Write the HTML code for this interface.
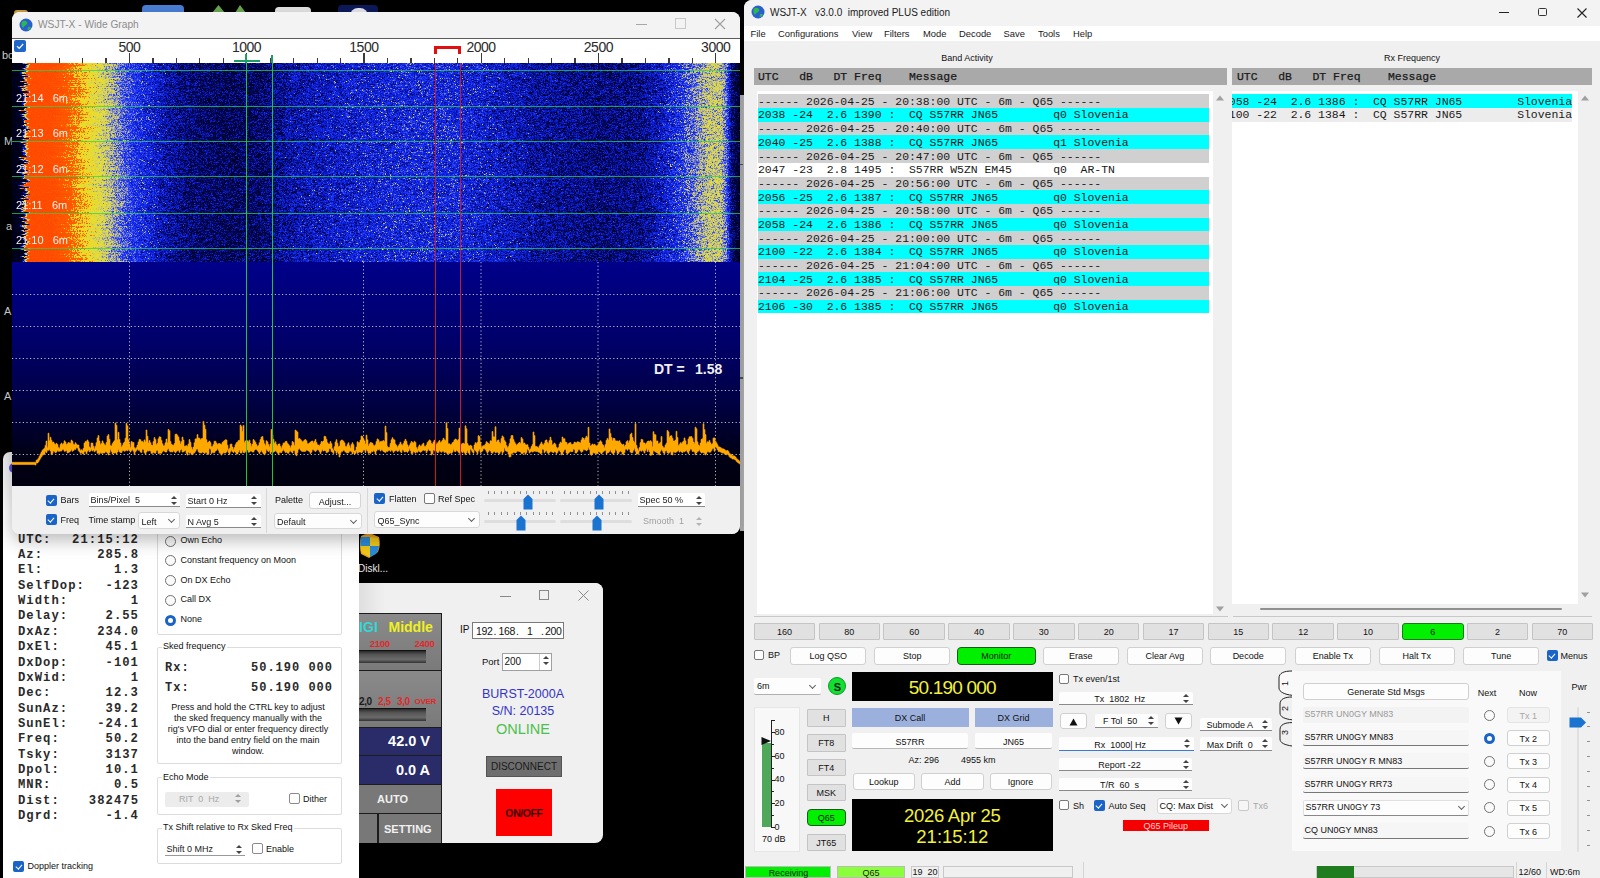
<!DOCTYPE html>
<html><head><meta charset="utf-8">
<style>
*{box-sizing:border-box}
html,body{margin:0;padding:0}
body{width:1600px;height:878px;background:#000;position:relative;overflow:hidden;font-family:"Liberation Sans",sans-serif;font-size:11px;color:#000}
.a{position:absolute}
.mono{font-family:"Liberation Mono",monospace}
.win{position:absolute;background:#f0f0f0}
.t{position:absolute;white-space:pre;line-height:1}
.ui{font-size:9px;color:#111}
.cb{position:absolute;width:11px;height:11px;background:#1a64c8;border-radius:2px}
.cb:after{content:"";position:absolute;left:3.6px;top:2px;width:2.6px;height:5px;border:solid #fff;border-width:0 1.1px 1.1px 0;transform:rotate(42deg)}
.cbu{position:absolute;width:11px;height:11px;background:#fdfdfd;border:1px solid #777;border-radius:2px}
.spin{position:absolute;background:#fff;border-bottom:1px solid #8a8a8a;border-radius:2px 2px 0 0}
.spin span{position:absolute;top:3.3px;font-size:9px;line-height:1;white-space:pre;color:#1a1a1a}
.spin i{position:absolute;right:3px;top:2px;width:7px;height:10px;background:linear-gradient(#555,#555) no-repeat}
.spin i{background:none}
.spin i:before{content:"";position:absolute;left:0.5px;top:0.5px;border:3px solid transparent;border-bottom:3.2px solid #444;border-top:0}
.spin i:after{content:"";position:absolute;left:0.5px;top:6.5px;border:3px solid transparent;border-top:3.2px solid #444;border-bottom:0}
.btn{position:absolute;background:#fdfdfd;border:1px solid #d4d4d4;border-radius:3px;font-size:9px;line-height:1;text-align:center;padding-top:4.5px;color:#1a1a1a;white-space:pre}
.combo{position:absolute;background:#fdfdfd;border:1px solid #d8d8d8;border-radius:3px}
.combo span{position:absolute;left:2.5px;top:4.5px;font-size:9px;line-height:1;white-space:pre;color:#1a1a1a}
.combo b{position:absolute;right:5px;top:4px;width:5px;height:5px;border:solid #606060;border-width:0 1px 1px 0;transform:rotate(45deg)}
.am{font-family:"Liberation Mono",monospace;font-weight:bold;font-size:12.2px;letter-spacing:1.05px;color:#2a2a2a}
.am2{font-family:"Liberation Mono",monospace;font-weight:bold;font-size:12px;letter-spacing:1px;color:#2a2a2a}
.spinarr{position:absolute;width:7px;height:10px}
.spinarr:before{content:"";position:absolute;left:0;top:0;border:3px solid transparent;border-bottom:3.2px solid #444;border-top:0}
.spinarr:after{content:"";position:absolute;left:0;top:6px;border:3px solid transparent;border-top:3.2px solid #444;border-bottom:0}
.lm{font-family:"Liberation Mono",monospace;font-size:11.45px;color:#1a1a1a}
.lm2{font-family:"Liberation Mono",monospace;font-size:11.45px;color:#1a1a1a;-webkit-text-stroke:0.25px #1a1a1a}
</style></head>
<body>
<!-- desktop bits -->
<div class="a" style="left:14px;top:10px;width:14px;height:6px;background:#c9a040;border-radius:3px 3px 0 0"></div>
<div class="a" style="left:142px;top:4.5px;width:42px;height:10px;background:#4a80d8;border-radius:4px 4px 0 0"></div>
<svg class="a" style="left:210px;top:4px" width="40" height="10"><path d="M2 9L8.5 1L15 9Z M25 9L30 1L36 9Z" fill="#6aa84f"/></svg>
<div class="a" style="left:275px;top:7px;width:36px;height:8px;background:#e6e6e6;border-radius:4px 4px 0 0"></div>
<div class="a" style="left:338px;top:4.5px;width:40px;height:10px;background:#0c1a5c;border-radius:4px 4px 0 0"></div>
<div class="a" style="left:350px;top:8px;width:18px;height:8px;background:#e8e8f0;border-radius:9px 9px 0 0"></div>
<div class="t" style="left:2px;top:50px;font-size:11px;color:#d8d8d8">bc</div>
<div class="t" style="left:4px;top:136px;font-size:11px;color:#d8d8d8">M</div>
<div class="t" style="left:6px;top:221px;font-size:11px;color:#d8d8d8">a</div>
<div class="t" style="left:4px;top:306px;font-size:11px;color:#d8d8d8">A</div>
<div class="t" style="left:4px;top:391px;font-size:11px;color:#d8d8d8">A</div>
<svg class="a" style="left:358px;top:533px" width="24" height="26" viewBox="0 0 24 26"><path d="M3 3 Q8 0 14 1 L21 4 Q23 12 20 19 L11 25 L3 21 Q1 12 3 3Z" fill="#e8a020"/><path d="M3 4 L12 4 L12 13 L2.5 13 Q2 8 3 4Z" fill="#2a8ad8"/><path d="M12 13 L21 13 Q20 19 18 21 L12 24Z" fill="#2a8ad8"/><path d="M12 4 L20 5 Q21.5 9 21 13 L12 13Z" fill="#f0c818"/><path d="M2.5 13 L12 13 L12 24 L4 20 Q2.5 17 2.5 13Z" fill="#f0c818"/></svg>
<div class="t" style="left:358px;top:564px;font-size:10px;color:#e8e8e8">Diskl...</div>
<!-- gray strip -->
<div class="a" style="left:740px;top:94.6px;width:4px;height:436px;background:#b4b4b4"></div>
<div class="a" style="left:740px;top:163.5px;width:3px;height:1.5px;background:#555"></div>
<div class="a" style="left:740px;top:377px;width:3px;height:1.5px;background:#555"></div>
<!-- POWER SUPPLY WINDOW -->
<div id="ps" class="a" style="left:355px;top:583px;width:248px;height:260px;border-radius:0 8px 8px 0;background:#f0f0f0;overflow:hidden">
<div class="a" style="left:0;top:0;width:248px;height:30px;background:linear-gradient(90deg,#dcdcdc,#f0f0f0 30px)"></div>
<div class="a" style="left:145px;top:12.5px;width:11px;height:1px;background:#888"></div>
<div class="a" style="left:184px;top:7px;width:10px;height:10px;border:1px solid #888"></div>
<svg class="a" style="left:223px;top:7px" width="11" height="11"><path d="M0.5 0.5L10.5 10.5M10.5 0.5L0.5 10.5" stroke="#888" stroke-width="1"/></svg>
<div class="a" style="left:0;top:29.5px;width:87px;height:231px;background:#1c1c1c"></div>
<div class="a" style="left:0;top:30.5px;width:86px;height:56px;background:linear-gradient(#8a8a8a,#7a7a7a)"></div>
<div class="t" style="left:-6px;top:37px;font-size:14px;font-weight:bold;color:#30d8d8">DIGI</div><div class="t" style="left:33.5px;top:37px;font-size:14px;font-weight:bold;color:#f0f020">Middle</div>
<div class="t" style="left:14.8px;top:56px;font-size:9.5px;font-weight:bold;color:#e02828;letter-spacing:-0.3px">2100</div><div class="t" style="left:59.5px;top:56px;font-size:9.5px;font-weight:bold;color:#e02828;letter-spacing:-0.3px">2400</div>
<div class="a" style="left:0;top:67px;width:71px;height:13px;background:linear-gradient(#2a2a2a,#555 30%,#6a6a6a 70%,#333);border-top:1px solid #111"></div>
<div class="a" style="left:0;top:87.5px;width:86px;height:56px;background:linear-gradient(#8a8a8a,#7a7a7a)"></div>
<div class="t" style="left:4px;top:113.5px;font-size:10px;font-weight:bold;color:#1a1a1a;letter-spacing:-0.4px">2,0</div><div class="t" style="left:23px;top:113.5px;font-size:10px;font-weight:bold;color:#e02828;letter-spacing:-0.4px">2,5</div><div class="t" style="left:42px;top:113.5px;font-size:10px;font-weight:bold;color:#e02828;letter-spacing:-0.4px">3,0</div><div class="t" style="left:59.5px;top:115px;font-size:8px;font-weight:bold;color:#e02828;letter-spacing:-0.3px">OVER</div>
<div class="a" style="left:0;top:124.5px;width:71px;height:13px;background:linear-gradient(#2a2a2a,#555 30%,#6a6a6a 70%,#333);border-top:1px solid #111"></div>
<div class="a" style="left:0;top:145px;width:86px;height:27px;background:#2a2c6a"></div><div class="t" style="left:0;top:151px;width:75px;text-align:right;font-size:14.5px;font-weight:bold;color:#fff">42.0 V</div>
<div class="a" style="left:0;top:173px;width:86px;height:27.5px;background:#2a2c6a"></div><div class="t" style="left:0;top:180px;width:75px;text-align:right;font-size:14.5px;font-weight:bold;color:#fff">0.0 A</div>
<div class="a" style="left:0;top:201.5px;width:86px;height:28px;background:#787878"></div><div class="t" style="left:22px;top:211px;font-size:11px;font-weight:bold;color:#f0f0f0">AUTO</div>
<div class="a" style="left:0;top:231px;width:22px;height:29px;background:#787878"></div>
<div class="a" style="left:24px;top:231px;width:62px;height:29px;background:#787878"></div><div class="t" style="left:29px;top:241px;font-size:11px;font-weight:bold;color:#f0f0f0">SETTING</div>
<div class="t ui" style="left:105px;top:42px;font-size:10px">IP</div>
<div class="a" style="left:117px;top:39px;width:92px;height:17px;background:#fff;border:1px solid #7a7a7a"></div>
<div class="t" style="left:121px;top:42.5px;font-size:10.5px;color:#111;letter-spacing:-0.3px">192</div><div class="t" style="left:138.5px;top:42.5px;font-size:10.5px;color:#111">.</div><div class="t" style="left:143.5px;top:42.5px;font-size:10.5px;color:#111;letter-spacing:-0.3px">168</div><div class="t" style="left:161px;top:42.5px;font-size:10.5px;color:#111">.</div><div class="t" style="left:172px;top:42.5px;font-size:10.5px;color:#111">1</div><div class="t" style="left:186px;top:42.5px;font-size:10.5px;color:#111">.</div><div class="t" style="left:190px;top:42.5px;font-size:10.5px;color:#111;letter-spacing:-0.3px">200</div>
<div class="t ui" style="left:127px;top:74px;font-size:9.5px">Port</div>
<div class="a" style="left:147px;top:70px;width:50px;height:18px;background:#fff;border:1px solid #a0a0a0"></div><div class="t" style="left:149.5px;top:73.5px;font-size:10px;color:#111">200</div>
<div class="a" style="left:184px;top:71px;width:12px;height:16px;border-left:1px solid #ccc"><div class="spinarr" style="left:3px;top:2px"></div></div>
<div class="t" style="left:118px;top:105px;width:100px;text-align:center;font-size:12.5px;color:#3434c4">BURST-2000A</div>
<div class="t" style="left:118px;top:121.5px;width:100px;text-align:center;font-size:12.5px;color:#3434c4">S/N: 20135</div>
<div class="t" style="left:118px;top:138.5px;width:100px;text-align:center;font-size:14.5px;color:#4cc04c">ONLINE</div>
<div class="a" style="left:131px;top:173px;width:76px;height:21px;background:#6e6e6e;border:1px solid #555"></div><div class="t" style="left:131px;top:179px;width:76px;text-align:center;font-size:10px;color:#1a1a1a">DISCONNECT</div>
<div class="a" style="left:141px;top:206px;width:56px;height:47px;background:#ff0000"></div><div class="t" style="left:141px;top:225px;width:56px;text-align:center;font-size:10.5px;font-weight:bold;color:#3a0000;letter-spacing:-0.4px">ON/OFF</div>
</div>

<!-- ASTRO WINDOW -->
<div id="astro" class="a" style="left:3px;top:452px;width:356px;height:426px;background:linear-gradient(#ececec,#f4f4f4 30px,#fff 60px);border-radius:7px 0 0 0">
<div class="a" style="left:6px;top:11px;width:10px;height:10px;border-radius:50%;background:#5b4fd0"></div>
<div class="t am" style="left:15px;top:81.5px">UTC:</div><div class="t am" style="left:34.5px;top:81.5px;width:101.5px;text-align:right">21:15:12</div>
<div class="t am" style="left:15px;top:96.9px">Az:</div><div class="t am" style="left:34.5px;top:96.9px;width:101.5px;text-align:right">285.8</div>
<div class="t am" style="left:15px;top:112.2px">El:</div><div class="t am" style="left:34.5px;top:112.2px;width:101.5px;text-align:right">1.3</div>
<div class="t am" style="left:15px;top:127.6px">SelfDop:</div><div class="t am" style="left:34.5px;top:127.6px;width:101.5px;text-align:right">-123</div>
<div class="t am" style="left:15px;top:143.0px">Width:</div><div class="t am" style="left:34.5px;top:143.0px;width:101.5px;text-align:right">1</div>
<div class="t am" style="left:15px;top:158.3px">Delay:</div><div class="t am" style="left:34.5px;top:158.3px;width:101.5px;text-align:right">2.55</div>
<div class="t am" style="left:15px;top:173.7px">DxAz:</div><div class="t am" style="left:34.5px;top:173.7px;width:101.5px;text-align:right">234.0</div>
<div class="t am" style="left:15px;top:189.1px">DxEl:</div><div class="t am" style="left:34.5px;top:189.1px;width:101.5px;text-align:right">45.1</div>
<div class="t am" style="left:15px;top:204.5px">DxDop:</div><div class="t am" style="left:34.5px;top:204.5px;width:101.5px;text-align:right">-101</div>
<div class="t am" style="left:15px;top:219.8px">DxWid:</div><div class="t am" style="left:34.5px;top:219.8px;width:101.5px;text-align:right">1</div>
<div class="t am" style="left:15px;top:235.2px">Dec:</div><div class="t am" style="left:34.5px;top:235.2px;width:101.5px;text-align:right">12.3</div>
<div class="t am" style="left:15px;top:250.6px">SunAz:</div><div class="t am" style="left:34.5px;top:250.6px;width:101.5px;text-align:right">39.2</div>
<div class="t am" style="left:15px;top:265.9px">SunEl:</div><div class="t am" style="left:34.5px;top:265.9px;width:101.5px;text-align:right">-24.1</div>
<div class="t am" style="left:15px;top:281.3px">Freq:</div><div class="t am" style="left:34.5px;top:281.3px;width:101.5px;text-align:right">50.2</div>
<div class="t am" style="left:15px;top:296.7px">Tsky:</div><div class="t am" style="left:34.5px;top:296.7px;width:101.5px;text-align:right">3137</div>
<div class="t am" style="left:15px;top:312.0px">Dpol:</div><div class="t am" style="left:34.5px;top:312.0px;width:101.5px;text-align:right">10.1</div>
<div class="t am" style="left:15px;top:327.4px">MNR:</div><div class="t am" style="left:34.5px;top:327.4px;width:101.5px;text-align:right">0.5</div>
<div class="t am" style="left:15px;top:342.8px">Dist:</div><div class="t am" style="left:34.5px;top:342.8px;width:101.5px;text-align:right">382475</div>
<div class="t am" style="left:15px;top:358.2px">Dgrd:</div><div class="t am" style="left:34.5px;top:358.2px;width:101.5px;text-align:right">-1.4</div>
<div class="a" style="left:154px;top:68px;width:184.5px;height:114.5px;border:1px solid #dcdcdc;border-radius:2px"></div>
<div class="a" style="left:162px;top:83.7px;width:11px;height:11px;border-radius:50%;background:#fafafa;border:1px solid #707070"></div>
<div class="t ui" style="left:177.5px;top:84.2px">Own Echo</div>
<div class="a" style="left:162px;top:103.4px;width:11px;height:11px;border-radius:50%;background:#fafafa;border:1px solid #707070"></div>
<div class="t ui" style="left:177.5px;top:103.9px">Constant frequency on Moon</div>
<div class="a" style="left:162px;top:123.1px;width:11px;height:11px;border-radius:50%;background:#fafafa;border:1px solid #707070"></div>
<div class="t ui" style="left:177.5px;top:123.6px">On DX Echo</div>
<div class="a" style="left:162px;top:142.8px;width:11px;height:11px;border-radius:50%;background:#fafafa;border:1px solid #707070"></div>
<div class="t ui" style="left:177.5px;top:143.3px">Call DX</div>
<div class="a" style="left:162px;top:162.5px;width:11px;height:11px;border-radius:50%;background:#fff;border:3px solid #1a64c8"></div>
<div class="t ui" style="left:177.5px;top:163.0px">None</div>
<div class="a" style="left:154px;top:194.5px;width:184.5px;height:117.5px;border:1px solid #dcdcdc;border-radius:2px"></div><div class="t ui" style="left:159px;top:190.0px;background:#fff;padding:0 1px">Sked frequency</div>
<div class="t am2" style="left:162px;top:209.5px">Rx:</div><div class="t am2" style="left:197px;top:209.5px;width:133px;text-align:right">50.190 000</div>
<div class="t am2" style="left:162px;top:230.1px">Tx:</div><div class="t am2" style="left:197px;top:230.1px;width:133px;text-align:right">50.190 000</div>
<div class="t ui" style="left:145px;top:250.6px;width:200px;text-align:center">Press and hold the CTRL key to adjust</div>
<div class="t ui" style="left:145px;top:261.7px;width:200px;text-align:center">the sked frequency manually with the</div>
<div class="t ui" style="left:145px;top:272.8px;width:200px;text-align:center">rig's VFO dial or enter frequency directly</div>
<div class="t ui" style="left:145px;top:283.9px;width:200px;text-align:center">into the band entry field on the main</div>
<div class="t ui" style="left:145px;top:295.0px;width:200px;text-align:center">window.</div>
<div class="a" style="left:154px;top:325px;width:184.5px;height:38px;border:1px solid #dcdcdc;border-radius:2px"></div><div class="t ui" style="left:159px;top:320.5px;background:#fff;padding:0 1px">Echo Mode</div>
<div class="a" style="left:162px;top:340px;width:84px;height:15px;background:#ececec;border-radius:2px"></div><div class="t ui" style="left:176px;top:343px;color:#a8a8a8">RIT  0  Hz</div>
<div class="a" style="left:232px;top:342px;width:8px;height:10px;opacity:0.45" ><div class="spinarr"></div></div>
<div class="cbu" style="left:286px;top:341px;border-color:#8a8a8a"></div><div class="t ui" style="left:300px;top:342.5px">Dither</div>
<div class="a" style="left:154px;top:375.5px;width:184.5px;height:36.0px;border:1px solid #dcdcdc;border-radius:2px"></div><div class="t ui" style="left:159px;top:371.0px;background:#fff;padding:0 1px">Tx Shift relative to Rx Sked Freq</div>
<div class="spin" style="left:162px;top:390px;width:80px;height:14px;border-bottom-color:#999"><span style="left:1.5px">Shift 0 MHz</span><i></i></div>
<div class="cbu" style="left:249px;top:391px;border-color:#8a8a8a"></div><div class="t ui" style="left:263px;top:392.5px">Enable</div>
<div class="cb" style="left:10px;top:408.5px"></div><div class="t ui" style="left:24.5px;top:410px">Doppler tracking</div>
</div>

<!-- WIDE GRAPH -->
<div id="wgsh" class="a" style="left:12px;top:12px;width:728px;height:522px;border-radius:8px;box-shadow:0 6px 18px rgba(0,0,0,0.28)"></div>
<div id="wg" class="win" style="left:12px;top:12px;width:728px;height:522px;border-radius:8px 8px 8px 8px;overflow:hidden;background:#f0f0f0">
  <div class="a" style="left:0;top:0;width:728px;height:26px;background:#f3f3f3"></div>
  <svg class="a" style="left:7px;top:6px" width="14" height="14" viewBox="0 0 14 14"><circle cx="7" cy="7" r="6.5" fill="#2a5fd0"/><path d="M3 3.5 Q6 2 8 4 Q9 6 7 7 Q5 8 4 10 Q2 8 2.5 5Z M9 9 Q11 8 12 10 Q10 12.5 8.5 12Z" fill="#2cb84a"/></svg>
  <div class="t" style="left:26px;top:7.5px;font-size:10.2px;color:#8c8c8c">WSJT-X - Wide Graph</div>
  <div class="a" style="left:624px;top:12px;width:11px;height:1px;background:#a8a8a8"></div>
  <div class="a" style="left:663px;top:6px;width:11px;height:11px;border:1px solid #c8c8c8"></div>
  <svg class="a" style="left:702px;top:6px" width="12" height="12"><path d="M1 1L11 11M11 1L1 11" stroke="#a0a0a0" stroke-width="1.1"/></svg>
  <div class="a" style="left:0;top:26px;width:728px;height:25px;background:#fff"></div><div id="tbline" class="a" style="left:0;top:25.5px;width:728px;height:1px;background:#5a5a5a"></div>
  <div class="a" style="left:2px;top:28px;width:12px;height:12px;background:#1e66c8;border-radius:2px"></div>
  <svg class="a" style="left:2px;top:28px" width="12" height="12"><path d="M3 6.2L5.2 8.4L9.2 4" stroke="#fff" stroke-width="1.2" fill="none"/></svg>
<div class="a" style="left:23.1px;top:46px;width:1.3px;height:5px;background:#3a3a3a"></div>
<div class="a" style="left:46.5px;top:46px;width:1.3px;height:5px;background:#3a3a3a"></div>
<div class="a" style="left:70.0px;top:46px;width:1.3px;height:5px;background:#3a3a3a"></div>
<div class="a" style="left:93.4px;top:46px;width:1.3px;height:5px;background:#3a3a3a"></div>
<div class="a" style="left:116.9px;top:41px;width:1.3px;height:10px;background:#3a3a3a"></div>
<div class="a" style="left:140.3px;top:46px;width:1.3px;height:5px;background:#3a3a3a"></div>
<div class="a" style="left:163.8px;top:46px;width:1.3px;height:5px;background:#3a3a3a"></div>
<div class="a" style="left:187.2px;top:46px;width:1.3px;height:5px;background:#3a3a3a"></div>
<div class="a" style="left:210.7px;top:46px;width:1.3px;height:5px;background:#3a3a3a"></div>
<div class="a" style="left:234.1px;top:41px;width:1.3px;height:10px;background:#3a3a3a"></div>
<div class="a" style="left:257.6px;top:46px;width:1.3px;height:5px;background:#3a3a3a"></div>
<div class="a" style="left:281.0px;top:46px;width:1.3px;height:5px;background:#3a3a3a"></div>
<div class="a" style="left:304.5px;top:46px;width:1.3px;height:5px;background:#3a3a3a"></div>
<div class="a" style="left:327.9px;top:46px;width:1.3px;height:5px;background:#3a3a3a"></div>
<div class="a" style="left:351.4px;top:41px;width:1.3px;height:10px;background:#3a3a3a"></div>
<div class="a" style="left:374.8px;top:46px;width:1.3px;height:5px;background:#3a3a3a"></div>
<div class="a" style="left:398.3px;top:46px;width:1.3px;height:5px;background:#3a3a3a"></div>
<div class="a" style="left:421.7px;top:46px;width:1.3px;height:5px;background:#3a3a3a"></div>
<div class="a" style="left:445.2px;top:46px;width:1.3px;height:5px;background:#3a3a3a"></div>
<div class="a" style="left:468.6px;top:41px;width:1.3px;height:10px;background:#3a3a3a"></div>
<div class="a" style="left:492.1px;top:46px;width:1.3px;height:5px;background:#3a3a3a"></div>
<div class="a" style="left:515.5px;top:46px;width:1.3px;height:5px;background:#3a3a3a"></div>
<div class="a" style="left:539.0px;top:46px;width:1.3px;height:5px;background:#3a3a3a"></div>
<div class="a" style="left:562.4px;top:46px;width:1.3px;height:5px;background:#3a3a3a"></div>
<div class="a" style="left:585.9px;top:41px;width:1.3px;height:10px;background:#3a3a3a"></div>
<div class="a" style="left:609.4px;top:46px;width:1.3px;height:5px;background:#3a3a3a"></div>
<div class="a" style="left:632.8px;top:46px;width:1.3px;height:5px;background:#3a3a3a"></div>
<div class="a" style="left:656.3px;top:46px;width:1.3px;height:5px;background:#3a3a3a"></div>
<div class="a" style="left:679.7px;top:46px;width:1.3px;height:5px;background:#3a3a3a"></div>
<div class="a" style="left:703.2px;top:41px;width:1.3px;height:10px;background:#3a3a3a"></div>
<div class="t" style="left:77.4px;top:27.8px;width:80px;text-align:center;font-size:14px;letter-spacing:-0.5px;color:#2a2a2a">500</div>
<div class="t" style="left:194.6px;top:27.8px;width:80px;text-align:center;font-size:14px;letter-spacing:-0.5px;color:#2a2a2a">1000</div>
<div class="t" style="left:311.9px;top:27.8px;width:80px;text-align:center;font-size:14px;letter-spacing:-0.5px;color:#2a2a2a">1500</div>
<div class="t" style="left:429.1px;top:27.8px;width:80px;text-align:center;font-size:14px;letter-spacing:-0.5px;color:#2a2a2a">2000</div>
<div class="t" style="left:546.4px;top:27.8px;width:80px;text-align:center;font-size:14px;letter-spacing:-0.5px;color:#2a2a2a">2500</div>
<div class="t" style="left:663.7px;top:27.8px;width:80px;text-align:center;font-size:14px;letter-spacing:-0.5px;color:#2a2a2a">3000</div>
  <!-- scale markers -->
  <div class="a" style="left:221.5px;top:47.5px;width:26.5px;height:2.5px;background:#1e9e60"></div>
  <div class="a" style="left:233px;top:42px;width:2px;height:9px;background:#1e9e60"></div>
  <div class="a" style="left:259px;top:43px;width:2px;height:8px;background:#1e9e60"></div>
  <div class="a" style="left:422px;top:34px;width:27px;height:3px;background:#e01010"></div>
  <div class="a" style="left:422px;top:34px;width:3px;height:8px;background:#e01010"></div>
  <div class="a" style="left:446px;top:34px;width:3px;height:8px;background:#e01010"></div>
  <!-- waterfall -->
  <div id="wfbg" class="a" style="left:0;top:51px;width:728px;height:199px;background:linear-gradient(90deg,rgb(0,0,25) 0px,rgb(0,0,27) 3px,rgb(2,3,37) 6px,rgb(28,26,66) 9px,rgb(109,77,80) 12px,rgb(205,99,43) 15px,rgb(249,82,7) 18px,rgb(254,75,0) 21px,rgb(255,75,0) 24px,rgb(255,75,0) 27px,rgb(255,75,0) 30px,rgb(255,76,0) 37px,rgb(254,79,0) 44px,rgb(254,90,1) 51px,rgb(252,112,5) 58px,rgb(246,151,17) 65px,rgb(239,188,31) 72px,rgb(229,210,50) 79px,rgb(217,210,73) 86px,rgb(192,192,110) 93px,rgb(157,162,151) 100px,rgb(117,128,189) 107px,rgb(72,89,218) 114px,rgb(44,64,227) 121px,rgb(35,54,219) 128px,rgb(27,45,210) 135px,rgb(20,36,194) 142px,rgb(12,27,175) 149px,rgb(8,21,156) 156px,rgb(6,18,145) 163px,rgb(5,15,131) 170px,rgb(4,13,119) 177px,rgb(3,12,115) 184px,rgb(3,11,108) 191px,rgb(3,10,105) 198px,rgb(2,9,99) 205px,rgb(2,9,96) 212px,rgb(2,9,95) 219px,rgb(2,9,97) 226px,rgb(2,10,102) 233px,rgb(2,10,103) 240px,rgb(3,10,105) 247px,rgb(3,12,115) 254px,rgb(5,15,132) 261px,rgb(6,18,144) 268px,rgb(8,21,157) 275px,rgb(10,24,164) 282px,rgb(11,26,171) 289px,rgb(12,27,173) 296px,rgb(14,30,181) 303px,rgb(14,29,181) 310px,rgb(17,33,189) 317px,rgb(17,33,188) 324px,rgb(19,36,195) 331px,rgb(23,40,198) 338px,rgb(23,40,198) 345px,rgb(24,41,202) 352px,rgb(24,42,204) 359px,rgb(26,43,202) 366px,rgb(29,47,205) 373px,rgb(29,47,205) 380px,rgb(29,47,209) 387px,rgb(30,49,209) 394px,rgb(30,48,211) 401px,rgb(34,52,208) 408px,rgb(31,50,210) 415px,rgb(29,47,207) 422px,rgb(31,48,207) 429px,rgb(31,49,210) 436px,rgb(30,48,207) 443px,rgb(27,45,203) 450px,rgb(24,42,204) 457px,rgb(23,40,200) 464px,rgb(21,38,196) 471px,rgb(20,36,191) 478px,rgb(18,34,188) 485px,rgb(14,30,182) 492px,rgb(13,28,176) 499px,rgb(12,26,173) 506px,rgb(10,23,165) 513px,rgb(8,21,155) 520px,rgb(7,20,152) 527px,rgb(7,19,147) 534px,rgb(7,19,147) 541px,rgb(6,17,141) 548px,rgb(6,17,139) 555px,rgb(5,16,135) 562px,rgb(5,16,134) 569px,rgb(4,15,127) 576px,rgb(4,14,124) 583px,rgb(4,14,123) 590px,rgb(4,14,122) 597px,rgb(4,14,126) 604px,rgb(4,15,128) 611px,rgb(5,15,129) 618px,rgb(5,15,132) 625px,rgb(6,18,145) 632px,rgb(9,23,160) 639px,rgb(14,28,175) 646px,rgb(20,37,194) 653px,rgb(30,48,207) 660px,rgb(43,62,216) 667px,rgb(78,94,206) 674px,rgb(99,112,199) 681px,rgb(141,149,166) 688px,rgb(176,178,130) 695px,rgb(182,184,122) 702px,rgb(163,167,142) 709px,rgb(42,58,200) 716px,rgb(1,6,79) 723px,rgb(0,3,52) 727px)"></div>
  <canvas id="wfc" class="a" style="left:0;top:51px;filter:blur(0.35px)" width="728" height="199"></canvas>
  <!-- green lines over waterfall -->
  <div class="a" style="left:0;top:58px;width:728px;height:1.3px;background:rgba(40,215,80,0.72)"></div>
  <div class="a" style="left:0;top:94px;width:728px;height:1.3px;background:rgba(40,215,80,0.72)"></div>
  <div class="a" style="left:0;top:129px;width:728px;height:1.3px;background:rgba(40,215,80,0.72)"></div>
  <div class="a" style="left:0;top:164px;width:728px;height:1.3px;background:rgba(40,215,80,0.72)"></div>
  <div class="a" style="left:0;top:200.5px;width:728px;height:1.3px;background:rgba(40,215,80,0.72)"></div>
  <div class="a" style="left:0;top:236px;width:728px;height:1.3px;background:rgba(40,215,80,0.72)"></div>
  <div class="t" style="left:4px;top:81px;font-size:11px;color:#f4f4f4">21:14   6m</div>
  <div class="t" style="left:4px;top:116px;font-size:11px;color:#f4f4f4">21:13   6m</div>
  <div class="t" style="left:4px;top:152px;font-size:11px;color:#f4f4f4">21:12   6m</div>
  <div class="t" style="left:4px;top:188px;font-size:11px;color:#f4f4f4">21:11   6m</div>
  <div class="t" style="left:4px;top:223px;font-size:11px;color:#f4f4f4">21:10   6m</div>
  <!-- spectrum -->
  <div id="sp" class="a" style="left:0;top:250px;width:728px;height:224px;background:linear-gradient(#00008a 0%,#00006a 35%,#000040 65%,#000018 85%,#00000e 100%)"></div>
  <svg class="a" style="left:0;top:250px" width="728" height="224">
    <g stroke="#dcdcdc" stroke-width="1" stroke-dasharray="1.2 2.4" opacity="0.85">
      <path d="M0 32.5H728M0 64.5H728M0 96.5H728M0 128.5H728M0 160.5H728M0 192.5H728"/>
      <path d="M117.5 0V224M351.5 0V224M469 0V224M586 0V224M703.5 0V224"/>
    </g>
  </svg>
  <div class="t" style="left:642px;top:350px;font-size:14px;font-weight:bold;color:#f0f0f0">DT =</div><div class="t" style="left:683px;top:350px;font-size:14px;font-weight:bold;color:#f0f0f0">1.58</div>
  <svg class="a" style="left:0;top:0" width="728" height="522"><path d="M0,450.3 L1,450.3 L1,450.3 L2,450.3 L2,450.3 L3,450.3 L3,450.3 L4,450.3 L4,450.3 L5,450.3 L5,450.3 L6,450.3 L6,450.3 L7,450.3 L7,450.3 L8,450.3 L8,450.3 L9,450.3 L9,450.3 L10,450.3 L10,450.3 L11,450.3 L11,450.3 L12,450.3 L12,450.3 L13,450.3 L13,450.3 L14,450.3 L14,450.3 L15,450.3 L15,450.3 L16,450.3 L16,450.3 L17,450.3 L17,450.3 L18,450.3 L18,450.3 L19,450.3 L19,450.3 L20,450.3 L20,450.3 L21,450.3 L21,450.3 L22,450.3 L22,450.3 L23,450.3 L23,450.6 L24,450.6 L24,448.2 L25,448.2 L25,447.7 L26,447.7 L26,446.2 L27,446.2 L27,444.2 L28,444.2 L28,442.0 L29,442.0 L29,440.1 L30,440.1 L30,438.2 L31,438.2 L31,437.3 L32,437.3 L32,436.2 L33,436.2 L33,433.4 L34,433.4 L34,429.0 L35,429.0 L35,435.2 L36,435.2 L36,421.2 L37,421.2 L37,428.7 L38,428.7 L38,425.3 L39,425.3 L39,428.2 L40,428.2 L40,430.3 L41,430.3 L41,430.1 L42,430.1 L42,431.8 L43,431.8 L43,432.6 L44,432.6 L44,431.3 L45,431.3 L45,432.4 L46,432.4 L46,435.4 L47,435.4 L47,436.2 L48,436.2 L48,432.6 L49,432.6 L49,431.1 L50,431.1 L50,432.6 L51,432.6 L51,431.6 L52,431.6 L52,428.8 L53,428.8 L53,430.0 L54,430.0 L54,432.5 L55,432.5 L55,431.8 L56,431.8 L56,430.5 L57,430.5 L57,430.9 L58,430.9 L58,431.2 L59,431.2 L59,428.1 L60,428.1 L60,429.3 L61,429.3 L61,432.3 L62,432.3 L62,432.7 L63,432.7 L63,430.8 L64,430.8 L64,432.3 L65,432.3 L65,433.1 L66,433.1 L66,433.0 L67,433.0 L67,436.6 L68,436.6 L68,438.3 L69,438.3 L69,437.8 L70,437.8 L70,438.4 L71,438.4 L71,436.5 L72,436.5 L72,431.1 L73,431.1 L73,429.5 L74,429.5 L74,429.4 L75,429.4 L75,428.0 L76,428.0 L76,429.8 L77,429.8 L77,434.9 L78,434.9 L78,436.0 L79,436.0 L79,431.0 L80,431.0 L80,431.1 L81,431.1 L81,434.2 L82,434.2 L82,436.7 L83,436.7 L83,434.2 L84,434.2 L84,430.7 L85,430.7 L85,425.9 L86,425.9 L86,423.6 L87,423.6 L87,429.0 L88,429.0 L88,432.2 L89,432.2 L89,431.6 L90,431.6 L90,428.9 L91,428.9 L91,430.9 L92,430.9 L92,432.6 L93,432.6 L93,433.3 L94,433.3 L94,430.5 L95,430.5 L95,424.1 L96,424.1 L96,422.6 L97,422.6 L97,427.2 L98,427.2 L98,433.6 L99,433.6 L99,433.9 L100,433.9 L100,431.7 L101,431.7 L101,430.1 L102,430.1 L102,428.7 L103,428.7 L103,411.0 L104,411.0 L104,413.2 L105,413.2 L105,427.7 L106,427.7 L106,420.3 L107,420.3 L107,427.4 L108,427.4 L108,430.9 L109,430.9 L109,434.9 L110,434.9 L110,433.6 L111,433.6 L111,431.3 L112,431.3 L112,430.0 L113,430.0 L113,426.2 L114,426.2 L114,411.3 L115,411.3 L115,413.8 L116,413.8 L116,427.7 L117,427.7 L117,431.9 L118,431.9 L118,435.3 L119,435.3 L119,429.5 L120,429.5 L120,430.2 L121,430.2 L121,430.5 L122,430.5 L122,435.7 L123,435.7 L123,436.8 L124,436.8 L124,435.4 L125,435.4 L125,433.1 L126,433.1 L126,429.9 L127,429.9 L127,427.4 L128,427.4 L128,427.7 L129,427.7 L129,429.5 L130,429.5 L130,429.4 L131,429.4 L131,430.6 L132,430.6 L132,427.9 L133,427.9 L133,429.8 L134,429.8 L134,418.0 L135,418.0 L135,424.2 L136,424.2 L136,430.9 L137,430.9 L137,428.5 L138,428.5 L138,430.7 L139,430.7 L139,433.1 L140,433.1 L140,433.5 L141,433.5 L141,429.6 L142,429.6 L142,425.6 L143,425.6 L143,427.6 L144,427.6 L144,432.6 L145,432.6 L145,431.3 L146,431.3 L146,426.8 L147,426.8 L147,424.8 L148,424.8 L148,425.1 L149,425.1 L149,428.4 L150,428.4 L150,431.8 L151,431.8 L151,433.9 L152,433.9 L152,433.4 L153,433.4 L153,430.8 L154,430.8 L154,427.0 L155,427.0 L155,430.7 L156,430.7 L156,417.4 L157,417.4 L157,418.7 L158,418.7 L158,429.4 L159,429.4 L159,432.3 L160,432.3 L160,433.0 L161,433.0 L161,433.3 L162,433.3 L162,431.6 L163,431.6 L163,422.3 L164,422.3 L164,422.1 L165,422.1 L165,423.4 L166,423.4 L166,425.1 L167,425.1 L167,428.8 L168,428.8 L168,432.1 L169,432.1 L169,429.7 L170,429.7 L170,425.1 L171,425.1 L171,428.1 L172,428.1 L172,434.3 L173,434.3 L173,433.9 L174,433.9 L174,433.7 L175,433.7 L175,434.2 L176,434.2 L176,432.0 L177,432.0 L177,427.6 L178,427.6 L178,430.3 L179,430.3 L179,435.3 L180,435.3 L180,437.5 L181,437.5 L181,435.1 L182,435.1 L182,430.7 L183,430.7 L183,426.9 L184,426.9 L184,426.8 L185,426.8 L185,422.6 L186,422.6 L186,426.0 L187,426.0 L187,426.2 L188,426.2 L188,427.8 L189,427.8 L189,426.7 L190,426.7 L190,426.5 L191,426.5 L191,409.4 L192,409.4 L192,413.2 L193,413.2 L193,417.3 L194,417.3 L194,427.7 L195,427.7 L195,430.7 L196,430.7 L196,430.1 L197,430.1 L197,429.0 L198,429.0 L198,430.6 L199,430.6 L199,434.6 L200,434.6 L200,434.4 L201,434.4 L201,432.4 L202,432.4 L202,429.2 L203,429.2 L203,429.3 L204,429.3 L204,431.0 L205,431.0 L205,432.5 L206,432.5 L206,431.7 L207,431.7 L207,431.5 L208,431.5 L208,432.0 L209,432.0 L209,432.4 L210,432.4 L210,430.3 L211,430.3 L211,429.6 L212,429.6 L212,428.6 L213,428.6 L213,427.8 L214,427.8 L214,427.9 L215,427.9 L215,433.2 L216,433.2 L216,437.4 L217,437.4 L217,436.4 L218,436.4 L218,432.2 L219,432.2 L219,432.1 L220,432.1 L220,435.0 L221,435.0 L221,437.4 L222,437.4 L222,435.5 L223,435.5 L223,432.7 L224,432.7 L224,430.7 L225,430.7 L225,430.1 L226,430.1 L226,428.6 L227,428.6 L227,428.3 L228,428.3 L228,413.1 L229,413.1 L229,414.4 L230,414.4 L230,419.3 L231,419.3 L231,413.4 L232,413.4 L232,430.4 L233,430.4 L233,428.9 L234,428.9 L234,428.4 L235,428.4 L235,428.8 L236,428.8 L236,429.8 L237,429.8 L237,428.2 L238,428.2 L238,431.5 L239,431.5 L239,434.4 L240,434.4 L240,432.1 L241,432.1 L241,427.6 L242,427.6 L242,428.7 L243,428.7 L243,430.2 L244,430.2 L244,432.5 L245,432.5 L245,434.3 L246,434.3 L246,433.6 L247,433.6 L247,430.7 L248,430.7 L248,427.5 L249,427.5 L249,425.1 L250,425.1 L250,424.5 L251,424.5 L251,428.2 L252,428.2 L252,431.7 L253,431.7 L253,433.6 L254,433.6 L254,428.8 L255,428.8 L255,429.8 L256,429.8 L256,432.4 L257,432.4 L257,434.7 L258,434.7 L258,432.0 L259,432.0 L259,417.4 L260,417.4 L260,422.7 L261,422.7 L261,427.3 L262,427.3 L262,431.3 L263,431.3 L263,429.8 L264,429.8 L264,432.6 L265,432.6 L265,434.0 L266,434.0 L266,432.1 L267,432.1 L267,431.9 L268,431.9 L268,434.5 L269,434.5 L269,436.2 L270,436.2 L270,433.4 L271,433.4 L271,431.1 L272,431.1 L272,431.0 L273,431.0 L273,429.6 L274,429.6 L274,429.3 L275,429.3 L275,431.2 L276,431.2 L276,432.5 L277,432.5 L277,433.8 L278,433.8 L278,435.8 L279,435.8 L279,433.6 L280,433.6 L280,429.5 L281,429.5 L281,430.6 L282,430.6 L282,433.4 L283,433.4 L283,418.0 L284,418.0 L284,419.1 L285,419.1 L285,420.1 L286,420.1 L286,426.9 L287,426.9 L287,426.6 L288,426.6 L288,427.4 L289,427.4 L289,428.7 L290,428.7 L290,430.0 L291,430.0 L291,429.2 L292,429.2 L292,428.0 L293,428.0 L293,427.6 L294,427.6 L294,428.8 L295,428.8 L295,431.7 L296,431.7 L296,431.7 L297,431.7 L297,431.0 L298,431.0 L298,430.1 L299,430.1 L299,429.3 L300,429.3 L300,429.1 L301,429.1 L301,430.9 L302,430.9 L302,429.3 L303,429.3 L303,427.5 L304,427.5 L304,430.6 L305,430.6 L305,432.8 L306,432.8 L306,433.1 L307,433.1 L307,433.8 L308,433.8 L308,432.1 L309,432.1 L309,429.5 L310,429.5 L310,430.0 L311,430.0 L311,429.0 L312,429.0 L312,424.3 L313,424.3 L313,424.6 L314,424.6 L314,427.3 L315,427.3 L315,430.7 L316,430.7 L316,431.9 L317,431.9 L317,432.0 L318,432.0 L318,429.6 L319,429.6 L319,431.7 L320,431.7 L320,436.7 L321,436.7 L321,438.5 L322,438.5 L322,434.7 L323,434.7 L323,429.9 L324,429.9 L324,427.7 L325,427.7 L325,431.2 L326,431.2 L326,434.8 L327,434.8 L327,434.1 L328,434.1 L328,429.2 L329,429.2 L329,428.1 L330,428.1 L330,428.2 L331,428.2 L331,429.3 L332,429.3 L332,430.8 L333,430.8 L333,434.3 L334,434.3 L334,434.7 L335,434.7 L335,432.4 L336,432.4 L336,430.8 L337,430.8 L337,433.7 L338,433.7 L338,435.9 L339,435.9 L339,432.4 L340,432.4 L340,430.7 L341,430.7 L341,432.7 L342,432.7 L342,439.0 L343,439.0 L343,438.4 L344,438.4 L344,435.0 L345,435.0 L345,429.7 L346,429.7 L346,430.8 L347,430.8 L347,430.5 L348,430.5 L348,428.1 L349,428.1 L349,424.0 L350,424.0 L350,424.4 L351,424.4 L351,427.1 L352,427.1 L352,428.8 L353,428.8 L353,432.1 L354,432.1 L354,423.1 L355,423.1 L355,427.8 L356,427.8 L356,433.9 L357,433.9 L357,431.9 L358,431.9 L358,430.6 L359,430.6 L359,430.7 L360,430.7 L360,431.3 L361,431.3 L361,433.2 L362,433.2 L362,433.9 L363,433.9 L363,432.8 L364,432.8 L364,429.6 L365,429.6 L365,426.9 L366,426.9 L366,427.8 L367,427.8 L367,430.2 L368,430.2 L368,429.6 L369,429.6 L369,429.3 L370,429.3 L370,429.3 L371,429.3 L371,428.5 L372,428.5 L372,429.5 L373,429.5 L373,414.1 L374,414.1 L374,420.6 L375,420.6 L375,434.4 L376,434.4 L376,435.5 L377,435.5 L377,435.2 L378,435.2 L378,431.5 L379,431.5 L379,427.8 L380,427.8 L380,425.7 L381,425.7 L381,427.3 L382,427.3 L382,427.9 L383,427.9 L383,431.9 L384,431.9 L384,433.5 L385,433.5 L385,435.2 L386,435.2 L386,433.8 L387,433.8 L387,432.2 L388,432.2 L388,430.2 L389,430.2 L389,432.5 L390,432.5 L390,433.2 L391,433.2 L391,431.4 L392,431.4 L392,429.1 L393,429.1 L393,427.3 L394,427.3 L394,429.3 L395,429.3 L395,432.8 L396,432.8 L396,435.1 L397,435.1 L397,433.5 L398,433.5 L398,431.3 L399,431.3 L399,429.5 L400,429.5 L400,430.4 L401,430.4 L401,431.0 L402,431.0 L402,429.3 L403,429.3 L403,430.4 L404,430.4 L404,435.6 L405,435.6 L405,437.2 L406,437.2 L406,434.7 L407,434.7 L407,432.9 L408,432.9 L408,434.3 L409,434.3 L409,433.8 L410,433.8 L410,432.2 L411,432.2 L411,431.2 L412,431.2 L412,434.3 L413,434.3 L413,434.5 L414,434.5 L414,432.9 L415,432.9 L415,430.4 L416,430.4 L416,429.3 L417,429.3 L417,427.9 L418,427.9 L418,428.7 L419,428.7 L419,431.5 L420,431.5 L420,432.1 L421,432.1 L421,429.9 L422,429.9 L422,428.1 L423,428.1 L423,429.7 L424,429.7 L424,432.2 L425,432.2 L425,431.2 L426,431.2 L426,429.8 L427,429.8 L427,428.5 L428,428.5 L428,430.4 L429,430.4 L429,429.7 L430,429.7 L430,428.3 L431,428.3 L431,426.2 L432,426.2 L432,427.8 L433,427.8 L433,428.4 L434,428.4 L434,410.8 L435,410.8 L435,416.6 L436,416.6 L436,431.8 L437,431.8 L437,431.8 L438,431.8 L438,433.0 L439,433.0 L439,432.2 L440,432.2 L440,430.7 L441,430.7 L441,429.9 L442,429.9 L442,427.9 L443,427.9 L443,427.0 L444,427.0 L444,427.7 L445,427.7 L445,428.8 L446,428.8 L446,427.6 L447,427.6 L447,416.0 L448,416.0 L448,431.0 L449,431.0 L449,432.6 L450,432.6 L450,431.5 L451,431.5 L451,431.2 L452,431.2 L452,432.1 L453,432.1 L453,413.8 L454,413.8 L454,416.8 L455,416.8 L455,431.6 L456,431.6 L456,433.4 L457,433.4 L457,434.1 L458,434.1 L458,433.3 L459,433.3 L459,433.9 L460,433.9 L460,436.9 L461,436.9 L461,438.2 L462,438.2 L462,432.9 L463,432.9 L463,430.7 L464,430.7 L464,431.6 L465,431.6 L465,430.3 L466,430.3 L466,423.7 L467,423.7 L467,424.4 L468,424.4 L468,430.1 L469,430.1 L469,435.5 L470,435.5 L470,434.2 L471,434.2 L471,433.7 L472,433.7 L472,433.5 L473,433.5 L473,432.1 L474,432.1 L474,429.7 L475,429.7 L475,430.6 L476,430.6 L476,431.6 L477,431.6 L477,432.0 L478,432.0 L478,428.8 L479,428.8 L479,429.1 L480,429.1 L480,419.5 L481,419.5 L481,424.8 L482,424.8 L482,425.0 L483,425.0 L483,414.7 L484,414.7 L484,429.9 L485,429.9 L485,428.6 L486,428.6 L486,427.9 L487,427.9 L487,430.5 L488,430.5 L488,431.3 L489,431.3 L489,426.4 L490,426.4 L490,423.9 L491,423.9 L491,425.3 L492,425.3 L492,428.4 L493,428.4 L493,430.0 L494,430.0 L494,433.5 L495,433.5 L495,435.4 L496,435.4 L496,434.4 L497,434.4 L497,431.6 L498,431.6 L498,426.8 L499,426.8 L499,423.6 L500,423.6 L500,423.5 L501,423.5 L501,427.5 L502,427.5 L502,429.9 L503,429.9 L503,431.8 L504,431.8 L504,433.3 L505,433.3 L505,432.3 L506,432.3 L506,431.3 L507,431.3 L507,430.5 L508,430.5 L508,431.2 L509,431.2 L509,425.5 L510,425.5 L510,427.0 L511,427.0 L511,431.2 L512,431.2 L512,431.0 L513,431.0 L513,432.7 L514,432.7 L514,433.0 L515,433.0 L515,432.7 L516,432.7 L516,435.3 L517,435.3 L517,438.0 L518,438.0 L518,436.9 L519,436.9 L519,434.6 L520,434.6 L520,432.6 L521,432.6 L521,420.0 L522,420.0 L522,423.6 L523,423.6 L523,434.3 L524,434.3 L524,434.5 L525,434.5 L525,434.9 L526,434.9 L526,435.9 L527,435.9 L527,433.8 L528,433.8 L528,432.0 L529,432.0 L529,430.2 L530,430.2 L530,432.2 L531,432.2 L531,433.1 L532,433.1 L532,431.2 L533,431.2 L533,428.5 L534,428.5 L534,427.9 L535,427.9 L535,430.4 L536,430.4 L536,431.2 L537,431.2 L537,428.5 L538,428.5 L538,425.2 L539,425.2 L539,428.5 L540,428.5 L540,433.1 L541,433.1 L541,432.3 L542,432.3 L542,431.0 L543,431.0 L543,432.3 L544,432.3 L544,435.3 L545,435.3 L545,436.3 L546,436.3 L546,435.6 L547,435.6 L547,432.0 L548,432.0 L548,430.2 L549,430.2 L549,430.9 L550,430.9 L550,425.0 L551,425.0 L551,426.8 L552,426.8 L552,426.7 L553,426.7 L553,429.9 L554,429.9 L554,430.5 L555,430.5 L555,432.4 L556,432.4 L556,431.7 L557,431.7 L557,430.9 L558,430.9 L558,430.6 L559,430.6 L559,432.3 L560,432.3 L560,432.6 L561,432.6 L561,431.9 L562,431.9 L562,430.1 L563,430.1 L563,430.4 L564,430.4 L564,430.8 L565,430.8 L565,429.8 L566,429.8 L566,429.9 L567,429.9 L567,430.4 L568,430.4 L568,430.9 L569,430.9 L569,428.0 L570,428.0 L570,425.8 L571,425.8 L571,426.3 L572,426.3 L572,427.9 L573,427.9 L573,425.9 L574,425.9 L574,424.2 L575,424.2 L575,425.3 L576,425.3 L576,415.3 L577,415.3 L577,431.0 L578,431.0 L578,434.1 L579,434.1 L579,433.3 L580,433.3 L580,432.0 L581,432.0 L581,433.1 L582,433.1 L582,432.2 L583,432.2 L583,433.3 L584,433.3 L584,434.0 L585,434.0 L585,433.5 L586,433.5 L586,431.8 L587,431.8 L587,429.9 L588,429.9 L588,428.8 L589,428.8 L589,429.9 L590,429.9 L590,432.5 L591,432.5 L591,433.5 L592,433.5 L592,435.7 L593,435.7 L593,432.6 L594,432.6 L594,428.3 L595,428.3 L595,426.4 L596,426.4 L596,427.9 L597,427.9 L597,416.9 L598,416.9 L598,421.4 L599,421.4 L599,425.5 L600,425.5 L600,428.8 L601,428.8 L601,426.3 L602,426.3 L602,426.5 L603,426.5 L603,428.8 L604,428.8 L604,429.1 L605,429.1 L605,428.9 L606,428.9 L606,429.5 L607,429.5 L607,428.7 L608,428.7 L608,430.7 L609,430.7 L609,432.1 L610,432.1 L610,432.9 L611,432.9 L611,432.3 L612,432.3 L612,434.6 L613,434.6 L613,433.1 L614,433.1 L614,429.7 L615,429.7 L615,428.7 L616,428.7 L616,430.9 L617,430.9 L617,428.8 L618,428.8 L618,422.5 L619,422.5 L619,421.2 L620,421.2 L620,425.5 L621,425.5 L621,429.0 L622,429.0 L622,430.5 L623,430.5 L623,411.6 L624,411.6 L624,433.3 L625,433.3 L625,436.6 L626,436.6 L626,438.6 L627,438.6 L627,435.5 L628,435.5 L628,430.5 L629,430.5 L629,427.3 L630,427.3 L630,427.7 L631,427.7 L631,430.8 L632,430.8 L632,431.0 L633,431.0 L633,432.3 L634,432.3 L634,431.0 L635,431.0 L635,429.5 L636,429.5 L636,429.0 L637,429.0 L637,429.4 L638,429.4 L638,428.7 L639,428.7 L639,429.8 L640,429.8 L640,434.4 L641,434.4 L641,419.7 L642,419.7 L642,422.5 L643,422.5 L643,422.8 L644,422.8 L644,429.1 L645,429.1 L645,428.9 L646,428.9 L646,431.9 L647,431.9 L647,431.2 L648,431.2 L648,430.5 L649,430.5 L649,424.5 L650,424.5 L650,434.1 L651,434.1 L651,435.4 L652,435.4 L652,435.7 L653,435.7 L653,433.0 L654,433.0 L654,431.3 L655,431.3 L655,418.4 L656,418.4 L656,419.8 L657,419.8 L657,425.3 L658,425.3 L658,424.0 L659,424.0 L659,423.7 L660,423.7 L660,426.2 L661,426.2 L661,429.1 L662,429.1 L662,429.1 L663,429.1 L663,428.1 L664,428.1 L664,419.3 L665,419.3 L665,425.5 L666,425.5 L666,433.4 L667,433.4 L667,432.4 L668,432.4 L668,430.8 L669,430.8 L669,431.8 L670,431.8 L670,430.2 L671,430.2 L671,429.3 L672,429.3 L672,425.9 L673,425.9 L673,428.8 L674,428.8 L674,432.7 L675,432.7 L675,432.4 L676,432.4 L676,427.0 L677,427.0 L677,424.8 L678,424.8 L678,424.7 L679,424.7 L679,424.6 L680,424.6 L680,426.3 L681,426.3 L681,430.0 L682,430.0 L682,431.2 L683,431.2 L683,415.2 L684,415.2 L684,416.8 L685,416.8 L685,429.8 L686,429.8 L686,432.9 L687,432.9 L687,434.0 L688,434.0 L688,431.1 L689,431.1 L689,427.3 L690,427.3 L690,426.8 L691,426.8 L691,411.7 L692,411.7 L692,417.6 L693,417.6 L693,422.6 L694,422.6 L694,431.2 L695,431.2 L695,429.8 L696,429.8 L696,430.1 L697,430.1 L697,428.4 L698,428.4 L698,430.8 L699,430.8 L699,432.5 L700,432.5 L700,431.7 L701,431.7 L701,426.0 L702,426.0 L702,425.9 L703,425.9 L703,429.2 L704,429.2 L704,430.8 L705,430.8 L705,432.7 L706,432.7 L706,434.7 L707,434.7 L707,434.9 L708,434.9 L708,435.4 L709,435.4 L709,436.2 L710,436.2 L710,436.8 L711,436.8 L711,436.9 L712,436.9 L712,437.6 L713,437.6 L713,438.4 L714,438.4 L714,438.8 L715,438.8 L715,438.4 L716,438.4 L716,439.4 L717,439.4 L717,441.2 L718,441.2 L718,442.2 L719,442.2 L719,442.6 L720,442.6 L720,443.7 L721,443.7 L721,443.8 L722,443.8 L722,444.1 L723,444.1 L723,444.9 L724,444.9 L724,446.4 L725,446.4 L725,447.4 L726,447.4 L726,448.2 L727,448.2 L727,449.2 L728,449.2 L728,449.6 L729,449.6 L729,452.1 L728,452.1 L728,451.8 L727,451.8 L727,450.9 L726,450.9 L726,450.2 L725,450.2 L725,449.3 L724,449.3 L724,447.9 L723,447.9 L723,447.2 L722,447.2 L722,447.0 L721,447.0 L721,447.0 L720,447.0 L720,446.0 L719,446.0 L719,445.7 L718,445.7 L718,444.8 L717,444.8 L717,443.1 L716,443.1 L716,442.2 L715,442.2 L715,442.7 L714,442.7 L714,442.4 L713,442.4 L713,441.7 L712,441.7 L712,441.1 L711,441.1 L711,441.1 L710,441.1 L710,440.6 L709,440.6 L709,439.9 L708,439.9 L708,439.5 L707,439.5 L707,439.4 L706,439.4 L706,437.5 L705,437.5 L705,435.7 L704,435.7 L704,434.2 L703,434.2 L703,439.3 L702,439.3 L702,436.3 L701,436.3 L701,436.8 L700,436.8 L700,438.6 L699,438.6 L699,440.1 L698,440.1 L698,440.2 L697,440.2 L697,439.8 L696,439.8 L696,439.4 L695,439.4 L695,441.4 L694,441.4 L694,442.9 L693,442.9 L693,441.3 L692,441.3 L692,440.8 L691,440.8 L691,440.5 L690,440.5 L690,440.9 L689,440.9 L689,439.7 L688,439.7 L688,437.7 L687,437.7 L687,439.0 L686,439.0 L686,439.7 L685,439.7 L685,440.9 L684,440.9 L684,442.7 L683,442.7 L683,440.1 L682,440.1 L682,439.3 L681,439.3 L681,439.4 L680,439.4 L680,437.3 L679,437.3 L679,436.9 L678,436.9 L678,438.7 L677,438.7 L677,441.6 L676,441.6 L676,440.1 L675,440.1 L675,438.3 L674,438.3 L674,438.9 L673,438.9 L673,439.7 L672,439.7 L672,439.4 L671,439.4 L671,440.7 L670,440.7 L670,439.9 L669,439.9 L669,438.9 L668,438.9 L668,440.1 L667,440.1 L667,438.3 L666,438.3 L666,439.0 L665,439.0 L665,440.0 L664,440.0 L664,440.4 L663,440.4 L663,440.2 L662,440.2 L662,439.7 L661,439.7 L661,442.9 L660,442.9 L660,442.5 L659,442.5 L659,439.5 L658,439.5 L658,440.6 L657,440.6 L657,441.3 L656,441.3 L656,440.8 L655,440.8 L655,438.8 L654,438.8 L654,438.9 L653,438.9 L653,441.7 L652,441.7 L652,440.9 L651,440.9 L651,438.9 L650,438.9 L650,437.6 L649,437.6 L649,439.2 L648,439.2 L648,442.8 L647,442.8 L647,442.2 L646,442.2 L646,440.9 L645,440.9 L645,440.4 L644,440.4 L644,439.9 L643,439.9 L643,439.1 L642,439.1 L642,438.8 L641,438.8 L641,442.3 L640,442.3 L640,443.1 L639,443.1 L639,443.3 L638,443.3 L638,439.7 L637,439.7 L637,437.8 L636,437.8 L636,439.6 L635,439.6 L635,436.7 L634,436.7 L634,438.6 L633,438.6 L633,441.0 L632,441.0 L632,439.1 L631,439.1 L631,438.1 L630,438.1 L630,439.2 L629,439.2 L629,438.6 L628,438.6 L628,439.0 L627,439.0 L627,441.6 L626,441.6 L626,441.9 L625,441.9 L625,442.3 L624,442.3 L624,439.3 L623,439.3 L623,436.4 L622,436.4 L622,438.2 L621,438.2 L621,440.6 L620,440.6 L620,440.9 L619,440.9 L619,440.1 L618,440.1 L618,437.2 L617,437.2 L617,436.9 L616,436.9 L616,438.2 L615,438.2 L615,436.9 L614,436.9 L614,437.3 L613,437.3 L613,440.6 L612,440.6 L612,442.7 L611,442.7 L611,441.9 L610,441.9 L610,439.7 L609,439.7 L609,439.0 L608,439.0 L608,439.7 L607,439.7 L607,441.4 L606,441.4 L606,441.5 L605,441.5 L605,438.6 L604,438.6 L604,437.3 L603,437.3 L603,440.5 L602,440.5 L602,442.4 L601,442.4 L601,441.3 L600,441.3 L600,440.2 L599,440.2 L599,438.1 L598,438.1 L598,439.4 L597,439.4 L597,440.6 L596,440.6 L596,440.9 L595,440.9 L595,441.9 L594,441.9 L594,438.3 L593,438.3 L593,438.7 L592,438.7 L592,439.5 L591,439.5 L591,440.5 L590,440.5 L590,442.0 L589,442.0 L589,440.7 L588,440.7 L588,439.9 L587,439.9 L587,439.6 L586,439.6 L586,441.5 L585,441.5 L585,441.8 L584,441.8 L584,441.4 L583,441.4 L583,441.0 L582,441.0 L582,440.4 L581,440.4 L581,441.8 L580,441.8 L580,443.2 L579,443.2 L579,442.4 L578,442.4 L578,437.6 L577,437.6 L577,435.8 L576,435.8 L576,437.9 L575,437.9 L575,438.7 L574,438.7 L574,438.0 L573,438.0 L573,437.8 L572,437.8 L572,437.6 L571,437.6 L571,439.4 L570,439.4 L570,440.2 L569,440.2 L569,439.1 L568,439.1 L568,437.5 L567,437.5 L567,437.4 L566,437.4 L566,439.5 L565,439.5 L565,440.9 L564,440.9 L564,441.0 L563,441.0 L563,437.5 L562,437.5 L562,436.9 L561,436.9 L561,439.5 L560,439.5 L560,439.7 L559,439.7 L559,439.2 L558,439.2 L558,440.1 L557,440.1 L557,440.9 L556,440.9 L556,442.0 L555,442.0 L555,440.9 L554,440.9 L554,437.4 L553,437.4 L553,437.8 L552,437.8 L552,439.5 L551,439.5 L551,442.3 L550,442.3 L550,442.8 L549,442.8 L549,440.0 L548,440.0 L548,438.4 L547,438.4 L547,438.6 L546,438.6 L546,440.6 L545,440.6 L545,441.6 L544,441.6 L544,439.9 L543,439.9 L543,439.6 L542,439.6 L542,440.5 L541,440.5 L541,440.3 L540,440.3 L540,439.6 L539,439.6 L539,439.4 L538,439.4 L538,440.4 L537,440.4 L537,441.5 L536,441.5 L536,440.8 L535,440.8 L535,438.5 L534,438.5 L534,439.2 L533,439.2 L533,440.7 L532,440.7 L532,437.6 L531,437.6 L531,437.0 L530,437.0 L530,441.3 L529,441.3 L529,441.7 L528,441.7 L528,440.6 L527,440.6 L527,440.2 L526,440.2 L526,439.5 L525,439.5 L525,439.5 L524,439.5 L524,439.3 L523,439.3 L523,439.1 L522,439.1 L522,439.5 L521,439.5 L521,440.1 L520,440.1 L520,439.2 L519,439.2 L519,439.9 L518,439.9 L518,441.0 L517,441.0 L517,438.3 L516,438.3 L516,436.9 L515,436.9 L515,440.6 L514,440.6 L514,442.2 L513,442.2 L513,440.3 L512,440.3 L512,440.8 L511,440.8 L511,441.8 L510,441.8 L510,441.6 L509,441.6 L509,439.9 L508,439.9 L508,439.5 L507,439.5 L507,439.2 L506,439.2 L506,438.9 L505,438.9 L505,440.1 L504,440.1 L504,440.9 L503,440.9 L503,440.5 L502,440.5 L502,440.3 L501,440.3 L501,441.3 L500,441.3 L500,441.7 L499,441.7 L499,444.8 L498,444.8 L498,445.0 L497,445.0 L497,442.0 L496,442.0 L496,439.4 L495,439.4 L495,439.2 L494,439.2 L494,438.4 L493,438.4 L493,436.0 L492,436.0 L492,439.9 L491,439.9 L491,441.4 L490,441.4 L490,439.0 L489,439.0 L489,439.8 L488,439.8 L488,441.7 L487,441.7 L487,441.2 L486,441.2 L486,440.1 L485,440.1 L485,440.3 L484,440.3 L484,440.7 L483,440.7 L483,439.6 L482,439.6 L482,439.7 L481,439.7 L481,441.2 L480,441.2 L480,440.9 L479,440.9 L479,439.0 L478,439.0 L478,438.1 L477,438.1 L477,439.5 L476,439.5 L476,441.3 L475,441.3 L475,439.4 L474,439.4 L474,437.7 L473,437.7 L473,436.8 L472,436.8 L472,436.7 L471,436.7 L471,438.9 L470,438.9 L470,439.9 L469,439.9 L469,440.4 L468,440.4 L468,437.3 L467,437.3 L467,438.9 L466,438.9 L466,441.8 L465,441.8 L465,439.9 L464,439.9 L464,438.5 L463,438.5 L463,437.7 L462,437.7 L462,441.2 L461,441.2 L461,440.1 L460,440.1 L460,438.3 L459,438.3 L459,437.0 L458,437.0 L458,441.7 L457,441.7 L457,440.9 L456,440.9 L456,438.7 L455,438.7 L455,440.8 L454,440.8 L454,442.6 L453,442.6 L453,440.7 L452,440.7 L452,439.4 L451,439.4 L451,440.8 L450,440.8 L450,439.6 L449,439.6 L449,439.4 L448,439.4 L448,441.3 L447,441.3 L447,440.3 L446,440.3 L446,439.0 L445,439.0 L445,438.2 L444,438.2 L444,439.7 L443,439.7 L443,439.3 L442,439.3 L442,437.5 L441,437.5 L441,440.2 L440,440.2 L440,441.3 L439,441.3 L439,440.7 L438,440.7 L438,441.4 L437,441.4 L437,441.4 L436,441.4 L436,442.0 L435,442.0 L435,440.5 L434,440.5 L434,439.9 L433,439.9 L433,440.6 L432,440.6 L432,439.2 L431,439.2 L431,439.2 L430,439.2 L430,440.2 L429,440.2 L429,439.6 L428,439.6 L428,438.4 L427,438.4 L427,440.3 L426,440.3 L426,440.7 L425,440.7 L425,439.0 L424,439.0 L424,439.6 L423,439.6 L423,438.6 L422,438.6 L422,437.9 L421,437.9 L421,441.7 L420,441.7 L420,442.9 L419,442.9 L419,438.9 L418,438.9 L418,438.4 L417,438.4 L417,437.1 L416,437.1 L416,438.7 L415,438.7 L415,440.7 L414,440.7 L414,438.3 L413,438.3 L413,438.5 L412,438.5 L412,438.1 L411,438.1 L411,438.5 L410,438.5 L410,439.5 L409,439.5 L409,440.2 L408,440.2 L408,439.6 L407,439.6 L407,438.7 L406,438.7 L406,440.2 L405,440.2 L405,439.9 L404,439.9 L404,441.1 L403,441.1 L403,440.0 L402,440.0 L402,439.2 L401,439.2 L401,441.6 L400,441.6 L400,441.6 L399,441.6 L399,438.5 L398,438.5 L398,436.8 L397,436.8 L397,439.1 L396,439.1 L396,440.3 L395,440.3 L395,439.5 L394,439.5 L394,439.7 L393,439.7 L393,439.9 L392,439.9 L392,438.3 L391,438.3 L391,437.8 L390,437.8 L390,440.6 L389,440.6 L389,439.8 L388,439.8 L388,437.7 L387,437.7 L387,438.9 L386,438.9 L386,439.4 L385,439.4 L385,438.3 L384,438.3 L384,438.6 L383,438.6 L383,439.2 L382,439.2 L382,440.4 L381,440.4 L381,438.8 L380,438.8 L380,437.9 L379,437.9 L379,439.3 L378,439.3 L378,438.2 L377,438.2 L377,438.5 L376,438.5 L376,439.6 L375,439.6 L375,439.3 L374,439.3 L374,440.5 L373,440.5 L373,440.0 L372,440.0 L372,439.4 L371,439.4 L371,438.3 L370,438.3 L370,437.7 L369,437.7 L369,439.0 L368,439.0 L368,437.2 L367,437.2 L367,437.8 L366,437.8 L366,437.6 L365,437.6 L365,438.9 L364,438.9 L364,442.1 L363,442.1 L363,439.5 L362,439.5 L362,438.5 L361,438.5 L361,439.8 L360,439.8 L360,439.6 L359,439.6 L359,441.3 L358,441.3 L358,440.9 L357,440.9 L357,441.3 L356,441.3 L356,439.0 L355,439.0 L355,437.6 L354,437.6 L354,440.5 L353,440.5 L353,438.1 L352,438.1 L352,437.1 L351,437.1 L351,439.7 L350,439.7 L350,440.9 L349,440.9 L349,440.0 L348,440.0 L348,439.9 L347,439.9 L347,440.6 L346,440.6 L346,441.3 L345,441.3 L345,439.6 L344,439.6 L344,441.4 L343,441.4 L343,442.0 L342,442.0 L342,439.9 L341,439.9 L341,442.0 L340,442.0 L340,439.8 L339,439.8 L339,438.9 L338,438.9 L338,439.2 L337,439.2 L337,440.8 L336,440.8 L336,440.9 L335,440.9 L335,440.8 L334,440.8 L334,439.9 L333,439.9 L333,438.8 L332,438.8 L332,438.1 L331,438.1 L331,439.3 L330,439.3 L330,439.6 L329,439.6 L329,441.3 L328,441.3 L328,445.0 L327,445.0 L327,441.4 L326,441.4 L326,439.7 L325,439.7 L325,441.3 L324,441.3 L324,438.9 L323,438.9 L323,437.7 L322,437.7 L322,441.5 L321,441.5 L321,440.2 L320,440.2 L320,439.6 L319,439.6 L319,436.9 L318,436.9 L318,436.5 L317,436.5 L317,439.6 L316,439.6 L316,440.3 L315,440.3 L315,440.6 L314,440.6 L314,438.7 L313,438.7 L313,438.5 L312,438.5 L312,439.0 L311,439.0 L311,437.4 L310,437.4 L310,439.3 L309,439.3 L309,441.5 L308,441.5 L308,439.6 L307,439.6 L307,437.9 L306,437.9 L306,437.5 L305,437.5 L305,438.4 L304,438.4 L304,439.5 L303,439.5 L303,438.7 L302,438.7 L302,437.7 L301,437.7 L301,437.8 L300,437.8 L300,440.2 L299,440.2 L299,441.5 L298,441.5 L298,439.7 L297,439.7 L297,438.9 L296,438.9 L296,438.3 L295,438.3 L295,438.0 L294,438.0 L294,439.2 L293,439.2 L293,439.5 L292,439.5 L292,439.6 L291,439.6 L291,439.4 L290,439.4 L290,439.1 L289,439.1 L289,437.9 L288,437.9 L288,436.6 L287,436.6 L287,437.2 L286,437.2 L286,440.7 L285,440.7 L285,443.7 L284,443.7 L284,442.6 L283,442.6 L283,438.8 L282,438.8 L282,438.5 L281,438.5 L281,441.0 L280,441.0 L280,439.9 L279,439.9 L279,438.8 L278,438.8 L278,439.5 L277,439.5 L277,441.3 L276,441.3 L276,441.0 L275,441.0 L275,439.9 L274,439.9 L274,440.4 L273,440.4 L273,439.1 L272,439.1 L272,437.8 L271,437.8 L271,438.8 L270,438.8 L270,440.6 L269,440.6 L269,440.4 L268,440.4 L268,440.6 L267,440.6 L267,442.4 L266,442.4 L266,440.9 L265,440.9 L265,439.4 L264,439.4 L264,438.7 L263,438.7 L263,439.4 L262,439.4 L262,440.2 L261,440.2 L261,438.0 L260,438.0 L260,440.0 L259,440.0 L259,441.7 L258,441.7 L258,438.4 L257,438.4 L257,439.6 L256,439.6 L256,438.6 L255,438.6 L255,437.3 L254,437.3 L254,441.2 L253,441.2 L253,442.7 L252,442.7 L252,441.7 L251,441.7 L251,440.2 L250,440.2 L250,438.4 L249,438.4 L249,439.7 L248,439.7 L248,441.6 L247,441.6 L247,440.0 L246,440.0 L246,438.4 L245,438.4 L245,437.6 L244,437.6 L244,437.3 L243,437.3 L243,438.1 L242,438.1 L242,440.0 L241,440.0 L241,440.0 L240,440.0 L240,439.0 L239,439.0 L239,439.0 L238,439.0 L238,440.0 L237,440.0 L237,440.2 L236,440.2 L236,437.9 L235,437.9 L235,437.7 L234,437.7 L234,439.6 L233,439.6 L233,440.8 L232,440.8 L232,440.5 L231,440.5 L231,438.8 L230,438.8 L230,441.1 L229,441.1 L229,440.9 L228,440.9 L228,438.0 L227,438.0 L227,440.1 L226,440.1 L226,442.0 L225,442.0 L225,441.9 L224,441.9 L224,440.2 L223,440.2 L223,439.2 L222,439.2 L222,440.4 L221,440.4 L221,439.7 L220,439.7 L220,438.2 L219,438.2 L219,439.8 L218,439.8 L218,442.4 L217,442.4 L217,440.4 L216,440.4 L216,438.0 L215,438.0 L215,439.9 L214,439.9 L214,441.0 L213,441.0 L213,440.9 L212,440.9 L212,440.6 L211,440.6 L211,441.7 L210,441.7 L210,443.1 L209,443.1 L209,441.6 L208,441.6 L208,440.8 L207,440.8 L207,438.3 L206,438.3 L206,436.5 L205,436.5 L205,438.2 L204,438.2 L204,439.0 L203,439.0 L203,440.6 L202,440.6 L202,440.8 L201,440.8 L201,440.3 L200,440.3 L200,441.5 L199,441.5 L199,437.2 L198,437.2 L198,436.4 L197,436.4 L197,442.3 L196,442.3 L196,442.2 L195,442.2 L195,440.6 L194,440.6 L194,440.5 L193,440.5 L193,441.4 L192,441.4 L192,440.5 L191,440.5 L191,439.9 L190,439.9 L190,440.9 L189,440.9 L189,440.9 L188,440.9 L188,440.8 L187,440.8 L187,439.7 L186,439.7 L186,437.1 L185,437.1 L185,437.2 L184,437.2 L184,439.3 L183,439.3 L183,440.7 L182,440.7 L182,441.3 L181,441.3 L181,442.6 L180,442.6 L180,442.4 L179,442.4 L179,440.8 L178,440.8 L178,441.2 L177,441.2 L177,440.1 L176,440.1 L176,443.0 L175,443.0 L175,441.3 L174,441.3 L174,438.2 L173,438.2 L173,439.1 L172,439.1 L172,439.7 L171,439.7 L171,440.1 L170,440.1 L170,437.2 L169,437.2 L169,438.0 L168,438.0 L168,440.3 L167,440.3 L167,438.6 L166,438.6 L166,438.5 L165,438.5 L165,439.4 L164,439.4 L164,440.7 L163,440.7 L163,439.7 L162,439.7 L162,438.6 L161,438.6 L161,439.9 L160,439.9 L160,439.8 L159,439.8 L159,439.9 L158,439.9 L158,439.1 L157,439.1 L157,436.7 L156,436.7 L156,437.5 L155,437.5 L155,439.9 L154,439.9 L154,440.0 L153,440.0 L153,439.2 L152,439.2 L152,438.7 L151,438.7 L151,439.4 L150,439.4 L150,441.3 L149,441.3 L149,441.3 L148,441.3 L148,441.3 L147,441.3 L147,441.5 L146,441.5 L146,438.3 L145,438.3 L145,438.8 L144,438.8 L144,441.2 L143,441.2 L143,441.0 L142,441.0 L142,440.2 L141,440.2 L141,441.3 L140,441.3 L140,441.4 L139,441.4 L139,439.1 L138,439.1 L138,438.4 L137,438.4 L137,439.1 L136,439.1 L136,438.4 L135,438.4 L135,440.0 L134,440.0 L134,442.2 L133,442.2 L133,440.7 L132,440.7 L132,437.6 L131,437.6 L131,437.2 L130,437.2 L130,440.5 L129,440.5 L129,439.9 L128,439.9 L128,438.3 L127,438.3 L127,438.2 L126,438.2 L126,437.0 L125,437.0 L125,438.4 L124,438.4 L124,439.8 L123,439.8 L123,442.4 L122,442.4 L122,439.3 L121,439.3 L121,437.4 L120,437.4 L120,438.6 L119,438.6 L119,440.0 L118,440.0 L118,438.5 L117,438.5 L117,437.7 L116,437.7 L116,438.8 L115,438.8 L115,438.0 L114,438.0 L114,438.8 L113,438.8 L113,439.2 L112,439.2 L112,438.5 L111,438.5 L111,438.8 L110,438.8 L110,440.5 L109,440.5 L109,440.5 L108,440.5 L108,439.7 L107,439.7 L107,437.8 L106,437.8 L106,440.0 L105,440.0 L105,441.9 L104,441.9 L104,440.5 L103,440.5 L103,441.1 L102,441.1 L102,441.0 L101,441.0 L101,441.9 L100,441.9 L100,439.4 L99,439.4 L99,437.4 L98,437.4 L98,440.7 L97,440.7 L97,442.9 L96,442.9 L96,441.1 L95,441.1 L95,440.1 L94,440.1 L94,439.8 L93,439.8 L93,440.9 L92,440.9 L92,440.9 L91,440.9 L91,441.3 L90,441.3 L90,441.2 L89,441.2 L89,440.8 L88,440.8 L88,441.7 L87,441.7 L87,441.3 L86,441.3 L86,441.3 L85,441.3 L85,438.0 L84,438.0 L84,438.8 L83,438.8 L83,439.7 L82,439.7 L82,437.9 L81,437.9 L81,439.0 L80,439.0 L80,437.6 L79,437.6 L79,439.0 L78,439.0 L78,439.7 L77,439.7 L77,437.9 L76,437.9 L76,439.2 L75,439.2 L75,441.8 L74,441.8 L74,439.4 L73,439.4 L73,439.6 L72,439.6 L72,442.2 L71,442.2 L71,441.4 L70,441.4 L70,440.8 L69,440.8 L69,441.3 L68,441.3 L68,439.7 L67,439.7 L67,438.6 L66,438.6 L66,436.1 L65,436.1 L65,435.7 L64,435.7 L64,437.4 L63,437.4 L63,437.3 L62,437.3 L62,438.5 L61,438.5 L61,439.2 L60,439.2 L60,437.5 L59,437.5 L59,439.1 L58,439.1 L58,440.0 L57,440.0 L57,440.4 L56,440.4 L56,440.9 L55,440.9 L55,438.4 L54,438.4 L54,439.0 L53,439.0 L53,439.3 L52,439.3 L52,437.4 L51,437.4 L51,437.6 L50,437.6 L50,438.9 L49,438.9 L49,439.0 L48,439.0 L48,439.3 L47,439.3 L47,439.2 L46,439.2 L46,438.4 L45,438.4 L45,440.1 L44,440.1 L44,440.7 L43,440.7 L43,439.4 L42,439.4 L42,438.9 L41,438.9 L41,441.4 L40,441.4 L40,442.6 L39,442.6 L39,438.9 L38,438.9 L38,437.6 L37,437.6 L37,438.3 L36,438.3 L36,438.2 L35,438.2 L35,440.5 L34,440.5 L34,439.5 L33,439.5 L33,441.9 L32,441.9 L32,442.7 L31,442.7 L31,443.2 L30,443.2 L30,444.8 L29,444.8 L29,446.3 L28,446.3 L28,448.1 L27,448.1 L27,449.8 L26,449.8 L26,450.9 L25,450.9 L25,451.0 L24,451.0 L24,453.1 L23,453.1 L23,452.5 L22,452.5 L22,452.5 L21,452.5 L21,452.5 L20,452.5 L20,452.5 L19,452.5 L19,452.5 L18,452.5 L18,452.5 L17,452.5 L17,452.5 L16,452.5 L16,452.5 L15,452.5 L15,452.5 L14,452.5 L14,452.5 L13,452.5 L13,452.5 L12,452.5 L12,452.5 L11,452.5 L11,452.5 L10,452.5 L10,452.5 L9,452.5 L9,452.5 L8,452.5 L8,452.5 L7,452.5 L7,452.5 L6,452.5 L6,452.5 L5,452.5 L5,452.5 L4,452.5 L4,452.5 L3,452.5 L3,452.5 L2,452.5 L2,452.5 L1,452.5 L1,452.5 L0,452.5Z" fill="#ffa800" stroke="#ffa800" stroke-width="0.6"/></svg>
  <!-- vertical markers -->
  <div class="a" style="left:234px;top:51px;width:1.2px;height:423px;background:#2ac030"></div>
  <div class="a" style="left:260px;top:51px;width:1.2px;height:423px;background:#2ac030"></div>
  <div class="a" style="left:422.5px;top:51px;width:1.4px;height:423px;background:#c81a2a"></div>
  <div class="a" style="left:448px;top:51px;width:1.4px;height:423px;background:#c81a2a"></div>
  <!-- controls -->
  <div id="ctl" class="a" style="left:0;top:474px;width:728px;height:48px;background:#f0f0f0;border-radius:0 0 8px 8px">
  </div>
</div>
<div id="ctlp" class="a" style="left:12px;top:486px;width:728px;height:48px">
  <div class="cb" style="left:33.5px;top:8.5px"></div><div class="t ui" style="left:48.5px;top:10px">Bars</div>
  <div class="spin" style="left:77px;top:7px;width:91px;height:14px"><span style="left:1.5px">Bins/Pixel  5</span><i></i></div>
  <div class="spin" style="left:174px;top:7.5px;width:74.5px;height:14px"><span style="left:1.5px">Start 0 Hz</span><i></i></div>
  <div class="a" style="left:254px;top:2px;width:1px;height:45px;background:#d8d8d8"></div>
  <div class="t ui" style="left:263px;top:10px">Palette</div>
  <div class="btn" style="left:297px;top:6px;width:52px;height:16.5px">Adjust...</div>
  <div class="a" style="left:355px;top:2px;width:1px;height:45px;background:#d8d8d8"></div>
  <div class="cb" style="left:362px;top:7px"></div><div class="t ui" style="left:377px;top:9px">Flatten</div>
  <div class="cbu" style="left:411.5px;top:7px"></div><div class="t ui" style="left:426px;top:9px">Ref Spec</div>
  <div class="spin" style="left:626px;top:7px;width:67px;height:14px"><span style="left:1.5px">Spec 50 %</span><i></i></div>

  <div class="cb" style="left:33.5px;top:28px"></div><div class="t ui" style="left:48.5px;top:29.5px">Freq</div>
  <div class="t ui" style="left:76.5px;top:30px">Time stamp</div>
  <div class="combo" style="left:126px;top:26px;width:42px;height:16.5px"><span>Left</span><b></b></div>
  <div class="spin" style="left:174px;top:28.5px;width:74.5px;height:13.5px"><span style="left:1.5px">N Avg 5</span><i></i></div>
  <div class="combo" style="left:261.5px;top:26.5px;width:88.5px;height:16.5px"><span>Default</span><b></b></div>
  <div class="combo" style="left:362px;top:25px;width:106px;height:17px"><span>Q65_Sync</span><b></b></div>
  <div class="spin dis" style="left:626px;top:28px;width:67px;height:14px;background:transparent;border-bottom-color:transparent"><span style="left:5px;color:#a0a0a0">Smooth  1</span><i style="opacity:0.35"></i></div>
<div class="a" style="left:472px;top:13px;width:72px;height:3px;background:#dedede;border-radius:2px"></div>
<div class="a" style="left:476.0px;top:5px;width:1px;height:3px;background:#909090"></div>
<div class="a" style="left:482.4px;top:5px;width:1px;height:3px;background:#909090"></div>
<div class="a" style="left:488.8px;top:5px;width:1px;height:3px;background:#909090"></div>
<div class="a" style="left:495.2px;top:5px;width:1px;height:3px;background:#909090"></div>
<div class="a" style="left:501.6px;top:5px;width:1px;height:3px;background:#909090"></div>
<div class="a" style="left:508.0px;top:5px;width:1px;height:3px;background:#909090"></div>
<div class="a" style="left:514.4px;top:5px;width:1px;height:3px;background:#909090"></div>
<div class="a" style="left:520.8px;top:5px;width:1px;height:3px;background:#909090"></div>
<div class="a" style="left:527.2px;top:5px;width:1px;height:3px;background:#909090"></div>
<div class="a" style="left:533.6px;top:5px;width:1px;height:3px;background:#909090"></div>
<div class="a" style="left:540.0px;top:5px;width:1px;height:3px;background:#909090"></div>
<svg class="a" style="left:511px;top:8px" width="10" height="16"><path d="M0.5 5 L5 0.5 L9.5 5 V15.5 H0.5Z" fill="#1a73d0"/></svg>
<div class="a" style="left:548px;top:13px;width:72px;height:3px;background:#dedede;border-radius:2px"></div>
<div class="a" style="left:552.0px;top:5px;width:1px;height:3px;background:#909090"></div>
<div class="a" style="left:558.4px;top:5px;width:1px;height:3px;background:#909090"></div>
<div class="a" style="left:564.8px;top:5px;width:1px;height:3px;background:#909090"></div>
<div class="a" style="left:571.2px;top:5px;width:1px;height:3px;background:#909090"></div>
<div class="a" style="left:577.6px;top:5px;width:1px;height:3px;background:#909090"></div>
<div class="a" style="left:584.0px;top:5px;width:1px;height:3px;background:#909090"></div>
<div class="a" style="left:590.4px;top:5px;width:1px;height:3px;background:#909090"></div>
<div class="a" style="left:596.8px;top:5px;width:1px;height:3px;background:#909090"></div>
<div class="a" style="left:603.2px;top:5px;width:1px;height:3px;background:#909090"></div>
<div class="a" style="left:609.6px;top:5px;width:1px;height:3px;background:#909090"></div>
<div class="a" style="left:616.0px;top:5px;width:1px;height:3px;background:#909090"></div>
<svg class="a" style="left:582px;top:8px" width="10" height="16"><path d="M0.5 5 L5 0.5 L9.5 5 V15.5 H0.5Z" fill="#1a73d0"/></svg>
<div class="a" style="left:472px;top:34px;width:72px;height:3px;background:#dedede;border-radius:2px"></div>
<div class="a" style="left:476.0px;top:26px;width:1px;height:3px;background:#909090"></div>
<div class="a" style="left:482.4px;top:26px;width:1px;height:3px;background:#909090"></div>
<div class="a" style="left:488.8px;top:26px;width:1px;height:3px;background:#909090"></div>
<div class="a" style="left:495.2px;top:26px;width:1px;height:3px;background:#909090"></div>
<div class="a" style="left:501.6px;top:26px;width:1px;height:3px;background:#909090"></div>
<div class="a" style="left:508.0px;top:26px;width:1px;height:3px;background:#909090"></div>
<div class="a" style="left:514.4px;top:26px;width:1px;height:3px;background:#909090"></div>
<div class="a" style="left:520.8px;top:26px;width:1px;height:3px;background:#909090"></div>
<div class="a" style="left:527.2px;top:26px;width:1px;height:3px;background:#909090"></div>
<div class="a" style="left:533.6px;top:26px;width:1px;height:3px;background:#909090"></div>
<div class="a" style="left:540.0px;top:26px;width:1px;height:3px;background:#909090"></div>
<svg class="a" style="left:504px;top:29px" width="10" height="16"><path d="M0.5 5 L5 0.5 L9.5 5 V15.5 H0.5Z" fill="#1a73d0"/></svg>
<div class="a" style="left:548px;top:34px;width:72px;height:3px;background:#dedede;border-radius:2px"></div>
<div class="a" style="left:552.0px;top:26px;width:1px;height:3px;background:#909090"></div>
<div class="a" style="left:558.4px;top:26px;width:1px;height:3px;background:#909090"></div>
<div class="a" style="left:564.8px;top:26px;width:1px;height:3px;background:#909090"></div>
<div class="a" style="left:571.2px;top:26px;width:1px;height:3px;background:#909090"></div>
<div class="a" style="left:577.6px;top:26px;width:1px;height:3px;background:#909090"></div>
<div class="a" style="left:584.0px;top:26px;width:1px;height:3px;background:#909090"></div>
<div class="a" style="left:590.4px;top:26px;width:1px;height:3px;background:#909090"></div>
<div class="a" style="left:596.8px;top:26px;width:1px;height:3px;background:#909090"></div>
<div class="a" style="left:603.2px;top:26px;width:1px;height:3px;background:#909090"></div>
<div class="a" style="left:609.6px;top:26px;width:1px;height:3px;background:#909090"></div>
<div class="a" style="left:616.0px;top:26px;width:1px;height:3px;background:#909090"></div>
<svg class="a" style="left:580px;top:29px" width="10" height="16"><path d="M0.5 5 L5 0.5 L9.5 5 V15.5 H0.5Z" fill="#1a73d0"/></svg>
</div>


<!-- MAIN WINDOW -->
<div id="main" class="a" style="left:744px;top:0;width:856px;height:878px;background:#f0f0f0;border-radius:8px 0 0 0;overflow:hidden">
<div class="a" style="left:0.0px;top:0.0px;width:856.0px;height:26.0px;background:#f3f3f3"></div>
<svg class="a" style="left:7.0px;top:5px" width="14" height="14" viewBox="0 0 14 14"><circle cx="7" cy="7" r="6.5" fill="#2a5fd0"/><path d="M3 3.5 Q6 2 8 4 Q9 6 7 7 Q5 8 4 10 Q2 8 2.5 5Z M9 9 Q11 8 12 10 Q10 12.5 8.5 12Z" fill="#2cb84a"/></svg>
<div class="t ui" style="left:26.0px;top:8.0px;font-size:10px;color:#1a1a1a">WSJT-X   v3.0.0  improved PLUS edition</div>
<div class="a" style="left:755.0px;top:11.5px;width:9.5px;height:1.2px;background:#222"></div>
<div class="a" style="left:794.0px;top:8.0px;width:9.0px;height:8.0px;border:1.2px solid #333;border-radius:1.5px"></div>
<svg class="a" style="left:833.0px;top:7.5px" width="10" height="10"><path d="M0.5 0.5L9.5 9.5M9.5 0.5L0.5 9.5" stroke="#222" stroke-width="1.1"/></svg>
<div class="a" style="left:0.0px;top:26.0px;width:856.0px;height:15.0px;background:#fff"></div>
<div class="t ui" style="left:6.5px;top:29.0px;font-size:9.4px;color:#1a1a1a">File</div>
<div class="t ui" style="left:34.0px;top:29.0px;font-size:9.4px;color:#1a1a1a">Configurations</div>
<div class="t ui" style="left:108.0px;top:29.0px;font-size:9.4px;color:#1a1a1a">View</div>
<div class="t ui" style="left:140.0px;top:29.0px;font-size:9.4px;color:#1a1a1a">Filters</div>
<div class="t ui" style="left:179.0px;top:29.0px;font-size:9.4px;color:#1a1a1a">Mode</div>
<div class="t ui" style="left:215.0px;top:29.0px;font-size:9.4px;color:#1a1a1a">Decode</div>
<div class="t ui" style="left:259.5px;top:29.0px;font-size:9.4px;color:#1a1a1a">Save</div>
<div class="t ui" style="left:294.0px;top:29.0px;font-size:9.4px;color:#1a1a1a">Tools</div>
<div class="t ui" style="left:329.0px;top:29.0px;font-size:9.4px;color:#1a1a1a">Help</div>
<div class="t ui" style="left:156.0px;top:54.1px;width:134.0px;text-align:center;font-size:9px;">Band Activity</div>
<div class="t ui" style="left:488.0px;top:54.1px;width:360.0px;text-align:center;font-size:9px;">Rx Frequency</div>
<div class="a" style="left:10.0px;top:68.2px;width:473.0px;height:16.4px;background:#a9a9a9"></div>
<div class="a" style="left:488.0px;top:68.2px;width:360.0px;height:16.4px;background:#a9a9a9"></div>
<div class="t lm2" style="left:14.0px;top:71.2px;">UTC   dB   DT Freq    Message</div>
<div class="t lm2" style="left:493.0px;top:71.2px;">UTC   dB   DT Freq    Message</div>
<div class="a" style="left:10.0px;top:89.0px;width:474.0px;height:527.0px;background:#f0f0f0"></div>
<div class="a" style="left:13.0px;top:91.0px;width:456.0px;height:523.0px;background:#fff"></div>
<div class="a" style="left:13.5px;top:94.0px;width:451.0px;height:14.0px;background:#d0d0d0"></div>
<div class="t lm" style="left:14.0px;top:95.7px;">------ 2026-04-25 - 20:38:00 UTC - 6m - Q65 ------</div>
<div class="a" style="left:13.5px;top:108.0px;width:451.0px;height:14.0px;background:#00ffff"></div>
<div class="t lm" style="left:14.0px;top:109.4px;">2038 -24  2.6 1390 :  CQ S57RR JN65        q0 Slovenia</div>
<div class="a" style="left:13.5px;top:122.0px;width:451.0px;height:13.0px;background:#d0d0d0"></div>
<div class="t lm" style="left:14.0px;top:123.1px;">------ 2026-04-25 - 20:40:00 UTC - 6m - Q65 ------</div>
<div class="a" style="left:13.5px;top:135.0px;width:451.0px;height:14.0px;background:#00ffff"></div>
<div class="t lm" style="left:14.0px;top:136.8px;">2040 -25  2.6 1388 :  CQ S57RR JN65        q1 Slovenia</div>
<div class="a" style="left:13.5px;top:149.0px;width:451.0px;height:14.0px;background:#d0d0d0"></div>
<div class="t lm" style="left:14.0px;top:150.5px;">------ 2026-04-25 - 20:47:00 UTC - 6m - Q65 ------</div>
<div class="a" style="left:13.5px;top:163.0px;width:451.0px;height:14.0px;background:#ffffff"></div>
<div class="t lm" style="left:14.0px;top:164.2px;">2047 -23  2.8 1495 :  S57RR W5ZN EM45      q0  AR-TN</div>
<div class="a" style="left:13.5px;top:177.0px;width:451.0px;height:13.0px;background:#d0d0d0"></div>
<div class="t lm" style="left:14.0px;top:177.8px;">------ 2026-04-25 - 20:56:00 UTC - 6m - Q65 ------</div>
<div class="a" style="left:13.5px;top:190.0px;width:451.0px;height:14.0px;background:#00ffff"></div>
<div class="t lm" style="left:14.0px;top:191.5px;">2056 -25  2.6 1387 :  CQ S57RR JN65        q0 Slovenia</div>
<div class="a" style="left:13.5px;top:204.0px;width:451.0px;height:14.0px;background:#d0d0d0"></div>
<div class="t lm" style="left:14.0px;top:205.2px;">------ 2026-04-25 - 20:58:00 UTC - 6m - Q65 ------</div>
<div class="a" style="left:13.5px;top:218.0px;width:451.0px;height:13.0px;background:#00ffff"></div>
<div class="t lm" style="left:14.0px;top:218.9px;">2058 -24  2.6 1386 :  CQ S57RR JN65        q0 Slovenia</div>
<div class="a" style="left:13.5px;top:231.0px;width:451.0px;height:14.0px;background:#d0d0d0"></div>
<div class="t lm" style="left:14.0px;top:232.6px;">------ 2026-04-25 - 21:00:00 UTC - 6m - Q65 ------</div>
<div class="a" style="left:13.5px;top:245.0px;width:451.0px;height:14.0px;background:#00ffff"></div>
<div class="t lm" style="left:14.0px;top:246.3px;">2100 -22  2.6 1384 :  CQ S57RR JN65        q0 Slovenia</div>
<div class="a" style="left:13.5px;top:259.0px;width:451.0px;height:13.0px;background:#d0d0d0"></div>
<div class="t lm" style="left:14.0px;top:260.0px;">------ 2026-04-25 - 21:04:00 UTC - 6m - Q65 ------</div>
<div class="a" style="left:13.5px;top:272.0px;width:451.0px;height:14.0px;background:#00ffff"></div>
<div class="t lm" style="left:14.0px;top:273.7px;">2104 -25  2.6 1385 :  CQ S57RR JN65        q0 Slovenia</div>
<div class="a" style="left:13.5px;top:286.0px;width:451.0px;height:14.0px;background:#d0d0d0"></div>
<div class="t lm" style="left:14.0px;top:287.4px;">------ 2026-04-25 - 21:06:00 UTC - 6m - Q65 ------</div>
<div class="a" style="left:13.5px;top:300.0px;width:451.0px;height:13.0px;background:#00ffff"></div>
<div class="t lm" style="left:14.0px;top:301.1px;">2106 -30  2.6 1385 :  CQ S57RR JN65        q0 Slovenia</div>
<svg class="a" style="left:471.5px;top:95px" width="8" height="6"><path d="M0 5.5L4 0.5L8 5.5Z" fill="#a0a0a0"/></svg>
<svg class="a" style="left:471.5px;top:606px" width="8" height="6"><path d="M0 0.5L4 5.5L8 0.5Z" fill="#a0a0a0"/></svg>
<div class="a" style="left:10.0px;top:615.5px;width:474.0px;height:1.0px;background:#c8c8c8"></div>
<div class="a" style="left:488.0px;top:89.0px;width:360.0px;height:527.0px;background:#f0f0f0"></div>
<div class="a" style="left:488.0px;top:91.0px;width:346.0px;height:513.0px;background:#fff"></div>
<div class="a" style="left:488.0px;top:94.4px;width:340.0px;height:13.7px;background:#00ffff"></div>
<div class="a" style="left:488.0px;top:94.4px;width:340px;height:27.38px;overflow:hidden"><div class="t lm" style="left:-10px;top:1.3px">2058 -24  2.6 1386 :  CQ S57RR JN65        Slovenia</div></div>
<div class="a" style="left:488.0px;top:108.1px;width:340.0px;height:13.7px;background:#ececec"></div>
<div class="a" style="left:488.0px;top:108.1px;width:340px;height:13.69px;overflow:hidden"><div class="t lm" style="left:-10px;top:1.3px">2100 -22  2.6 1384 :  CQ S57RR JN65        Slovenia</div></div>
<svg class="a" style="left:836.5px;top:95px" width="8" height="6"><path d="M0 5.5L4 0.5L8 5.5Z" fill="#a0a0a0"/></svg>
<svg class="a" style="left:836.5px;top:592px" width="8" height="6"><path d="M0 0.5L4 5.5L8 0.5Z" fill="#a0a0a0"/></svg>
<div class="a" style="left:516.0px;top:608.3px;width:302.0px;height:1.5px;background:#909090;border-radius:1px"></div>
<div class="a" style="left:489.0px;top:615.5px;width:359.0px;height:1.0px;background:#c8c8c8"></div>
<div class="a" style="left:9.8px;top:622.8px;width:61.5px;height:17.6px;background:#e1e1e1;border:1px solid #c4c4c4;border-radius:1px"></div>
<div class="t ui" style="left:9.8px;top:628.4px;width:61.5px;text-align:center;font-size:9px;">160</div>
<div class="a" style="left:74.6px;top:622.8px;width:61.5px;height:17.6px;background:#e1e1e1;border:1px solid #c4c4c4;border-radius:1px"></div>
<div class="t ui" style="left:74.6px;top:628.4px;width:61.5px;text-align:center;font-size:9px;">80</div>
<div class="a" style="left:139.4px;top:622.8px;width:61.5px;height:17.6px;background:#e1e1e1;border:1px solid #c4c4c4;border-radius:1px"></div>
<div class="t ui" style="left:139.4px;top:628.4px;width:61.5px;text-align:center;font-size:9px;">60</div>
<div class="a" style="left:204.3px;top:622.8px;width:61.5px;height:17.6px;background:#e1e1e1;border:1px solid #c4c4c4;border-radius:1px"></div>
<div class="t ui" style="left:204.3px;top:628.4px;width:61.5px;text-align:center;font-size:9px;">40</div>
<div class="a" style="left:269.1px;top:622.8px;width:61.5px;height:17.6px;background:#e1e1e1;border:1px solid #c4c4c4;border-radius:1px"></div>
<div class="t ui" style="left:269.1px;top:628.4px;width:61.5px;text-align:center;font-size:9px;">30</div>
<div class="a" style="left:333.9px;top:622.8px;width:61.5px;height:17.6px;background:#e1e1e1;border:1px solid #c4c4c4;border-radius:1px"></div>
<div class="t ui" style="left:333.9px;top:628.4px;width:61.5px;text-align:center;font-size:9px;">20</div>
<div class="a" style="left:398.7px;top:622.8px;width:61.5px;height:17.6px;background:#e1e1e1;border:1px solid #c4c4c4;border-radius:1px"></div>
<div class="t ui" style="left:398.7px;top:628.4px;width:61.5px;text-align:center;font-size:9px;">17</div>
<div class="a" style="left:463.5px;top:622.8px;width:61.5px;height:17.6px;background:#e1e1e1;border:1px solid #c4c4c4;border-radius:1px"></div>
<div class="t ui" style="left:463.5px;top:628.4px;width:61.5px;text-align:center;font-size:9px;">15</div>
<div class="a" style="left:528.4px;top:622.8px;width:61.5px;height:17.6px;background:#e1e1e1;border:1px solid #c4c4c4;border-radius:1px"></div>
<div class="t ui" style="left:528.4px;top:628.4px;width:61.5px;text-align:center;font-size:9px;">12</div>
<div class="a" style="left:593.2px;top:622.8px;width:61.5px;height:17.6px;background:#e1e1e1;border:1px solid #c4c4c4;border-radius:1px"></div>
<div class="t ui" style="left:593.2px;top:628.4px;width:61.5px;text-align:center;font-size:9px;">10</div>
<div class="a" style="left:658.0px;top:622.8px;width:61.5px;height:17.6px;background:#00f000;border:1px solid #1a7a1a;border-radius:3px"></div>
<div class="t ui" style="left:658.0px;top:628.4px;width:61.5px;text-align:center;font-size:9px;">6</div>
<div class="a" style="left:722.8px;top:622.8px;width:61.5px;height:17.6px;background:#e1e1e1;border:1px solid #c4c4c4;border-radius:1px"></div>
<div class="t ui" style="left:722.8px;top:628.4px;width:61.5px;text-align:center;font-size:9px;">2</div>
<div class="a" style="left:787.6px;top:622.8px;width:61.5px;height:17.6px;background:#e1e1e1;border:1px solid #c4c4c4;border-radius:1px"></div>
<div class="t ui" style="left:787.6px;top:628.4px;width:61.5px;text-align:center;font-size:9px;">70</div>
<div class="a" style="left:9.7px;top:650.0px;width:10.0px;height:10.0px;background:#fdfdfd;border:1px solid #777;border-radius:2px"></div>
<div class="t ui" style="left:24.0px;top:651.3px;">BP</div>
<div class="a" style="left:46.0px;top:647.0px;width:76.3px;height:17.5px;background:#fdfdfd;border:1px solid #d0d0d0;border-radius:3px;"></div><div class="t ui" style="left:46.0px;top:652.4px;width:76.3px;text-align:center;font-size:9px;">Log QSO</div>
<div class="a" style="left:130.0px;top:647.0px;width:76.3px;height:17.5px;background:#fdfdfd;border:1px solid #d0d0d0;border-radius:3px;"></div><div class="t ui" style="left:130.0px;top:652.4px;width:76.3px;text-align:center;font-size:9px;">Stop</div>
<div class="a" style="left:298.5px;top:647.0px;width:76.3px;height:17.5px;background:#fdfdfd;border:1px solid #d0d0d0;border-radius:3px;"></div><div class="t ui" style="left:298.5px;top:652.4px;width:76.3px;text-align:center;font-size:9px;">Erase</div>
<div class="a" style="left:382.8px;top:647.0px;width:76.3px;height:17.5px;background:#fdfdfd;border:1px solid #d0d0d0;border-radius:3px;"></div><div class="t ui" style="left:382.8px;top:652.4px;width:76.3px;text-align:center;font-size:9px;">Clear Avg</div>
<div class="a" style="left:466.0px;top:647.0px;width:76.3px;height:17.5px;background:#fdfdfd;border:1px solid #d0d0d0;border-radius:3px;"></div><div class="t ui" style="left:466.0px;top:652.4px;width:76.3px;text-align:center;font-size:9px;">Decode</div>
<div class="a" style="left:550.7px;top:647.0px;width:76.3px;height:17.5px;background:#fdfdfd;border:1px solid #d0d0d0;border-radius:3px;"></div><div class="t ui" style="left:550.7px;top:652.4px;width:76.3px;text-align:center;font-size:9px;">Enable Tx</div>
<div class="a" style="left:634.6px;top:647.0px;width:76.3px;height:17.5px;background:#fdfdfd;border:1px solid #d0d0d0;border-radius:3px;"></div><div class="t ui" style="left:634.6px;top:652.4px;width:76.3px;text-align:center;font-size:9px;">Halt Tx</div>
<div class="a" style="left:719.0px;top:647.0px;width:76.3px;height:17.5px;background:#fdfdfd;border:1px solid #d0d0d0;border-radius:3px;"></div><div class="t ui" style="left:719.0px;top:652.4px;width:76.3px;text-align:center;font-size:9px;">Tune</div>
<div class="a" style="left:213.0px;top:646.5px;width:78.5px;height:18.5px;background:#00f000;border:1px solid #1a5a1a;border-radius:4px"></div>
<div class="t ui" style="left:213.0px;top:652.4px;width:78.5px;text-align:center;font-size:9px;">Monitor</div>
<div class="cb" style="left:802.5px;top:650px"></div>
<div class="t ui" style="left:816.5px;top:651.5px;">Menus</div>
<div class="a" style="left:10.3px;top:677.6px;width:66.7px;height:17.4px;background:#fdfdfd;border-bottom:1px solid #b0b0b0;border-radius:2px"></div>
<div class="t ui" style="left:13.0px;top:682.0px;">6m</div>
<div class="a" style="left:66.0px;top:682.5px;width:5px;height:5px;border:solid #606060;border-width:0 1px 1px 0;transform:rotate(45deg)"></div>
<div class="a" style="left:84.3px;top:677.0px;width:18.0px;height:18.0px;background:#10e030;border-radius:50%;border:1px solid #0a9a20"></div>
<div class="t ui" style="left:84.3px;top:681.6px;width:18.0px;text-align:center;font-size:11px;font-weight:bold;font-size:11px;color:#102010">S</div>
<div class="a" style="left:107.5px;top:671.6px;width:201.5px;height:29.4px;background:#000"></div>
<div class="t ui" style="left:107.5px;top:678.2px;width:201.5px;text-align:center;font-size:19px;color:#f2f23a;font-size:19px;letter-spacing:-0.8px">50.190 000</div>
<div class="a" style="left:9.6px;top:707.0px;width:46.7px;height:145.3px;background:#f8f8f8;border:1px solid #e6e6e6"></div>
<div class="a" style="left:18.3px;top:743.0px;width:8.7px;height:83.7px;background:#4fa85a"></div>
<svg class="a" style="left:17.0px;top:736px" width="12" height="10"><path d="M0.5 1 L10 5 L0.5 9Z" fill="#111"/></svg>
<div class="a" style="left:27.0px;top:720.0px;width:1.2px;height:107.0px;background:#222"></div>
<div class="a" style="left:27.0px;top:732.1px;width:4.0px;height:1.0px;background:#222"></div>
<div class="a" style="left:27.0px;top:744.0px;width:2.5px;height:1.0px;background:#222"></div>
<div class="t ui" style="left:30.5px;top:728.0px;font-size:9px">80</div>
<div class="a" style="left:27.0px;top:755.8px;width:4.0px;height:1.0px;background:#222"></div>
<div class="a" style="left:27.0px;top:767.7px;width:2.5px;height:1.0px;background:#222"></div>
<div class="t ui" style="left:30.5px;top:751.7px;font-size:9px">60</div>
<div class="a" style="left:27.0px;top:779.5px;width:4.0px;height:1.0px;background:#222"></div>
<div class="a" style="left:27.0px;top:791.4px;width:2.5px;height:1.0px;background:#222"></div>
<div class="t ui" style="left:30.5px;top:775.4px;font-size:9px">40</div>
<div class="a" style="left:27.0px;top:803.3px;width:4.0px;height:1.0px;background:#222"></div>
<div class="a" style="left:27.0px;top:815.1px;width:2.5px;height:1.0px;background:#222"></div>
<div class="t ui" style="left:30.5px;top:799.2px;font-size:9px">20</div>
<div class="a" style="left:27.0px;top:827.0px;width:4.0px;height:1.0px;background:#222"></div>
<div class="t ui" style="left:30.5px;top:822.9px;font-size:9px">0</div>
<div class="a" style="left:27.0px;top:720.0px;width:4.0px;height:1.0px;background:#222"></div>
<div class="t ui" style="left:18.0px;top:835.0px;font-size:9px">70 dB</div>
<div class="a" style="left:62.6px;top:709.0px;width:39.4px;height:17.5px;background:#e1e1e1;border:1px solid #c4c4c4;border-radius:1px"></div>
<div class="t ui" style="left:62.6px;top:714.4px;width:39.4px;text-align:center;font-size:9px;">H</div>
<div class="a" style="left:62.6px;top:734.0px;width:39.4px;height:17.5px;background:#e1e1e1;border:1px solid #c4c4c4;border-radius:1px"></div>
<div class="t ui" style="left:62.6px;top:739.3px;width:39.4px;text-align:center;font-size:9px;">FT8</div>
<div class="a" style="left:62.6px;top:758.9px;width:39.4px;height:17.5px;background:#e1e1e1;border:1px solid #c4c4c4;border-radius:1px"></div>
<div class="t ui" style="left:62.6px;top:764.3px;width:39.4px;text-align:center;font-size:9px;">FT4</div>
<div class="a" style="left:62.6px;top:783.9px;width:39.4px;height:17.5px;background:#e1e1e1;border:1px solid #c4c4c4;border-radius:1px"></div>
<div class="t ui" style="left:62.6px;top:789.2px;width:39.4px;text-align:center;font-size:9px;">MSK</div>
<div class="a" style="left:62.6px;top:808.8px;width:39.4px;height:17.5px;background:#00f000;border:1px solid #1a5a1a;border-radius:4px"></div>
<div class="t ui" style="left:62.6px;top:814.2px;width:39.4px;text-align:center;font-size:9px;">Q65</div>
<div class="a" style="left:62.6px;top:833.8px;width:39.4px;height:17.5px;background:#e1e1e1;border:1px solid #c4c4c4;border-radius:1px"></div>
<div class="t ui" style="left:62.6px;top:839.1px;width:39.4px;text-align:center;font-size:9px;">JT65</div>
<div class="a" style="left:107.5px;top:708.0px;width:117.1px;height:18.5px;background:#9bb0dd"></div>
<div class="t ui" style="left:107.5px;top:713.8px;width:117.1px;text-align:center;font-size:9px;">DX Call</div>
<div class="a" style="left:230.5px;top:708.0px;width:78.2px;height:18.5px;background:#9bb0dd"></div>
<div class="t ui" style="left:230.5px;top:713.8px;width:78.2px;text-align:center;font-size:9px;">DX Grid</div>
<div class="a" style="left:108.0px;top:733.0px;width:116.0px;height:16.0px;background:#fdfdfd;border-bottom:1px solid #b8b8b8;border-radius:2px"></div>
<div class="t ui" style="left:108.0px;top:737.6px;width:116.0px;text-align:center;font-size:9px;">S57RR</div>
<div class="a" style="left:231.0px;top:733.0px;width:77.0px;height:16.0px;background:#fdfdfd;border-bottom:1px solid #b8b8b8;border-radius:2px"></div>
<div class="t ui" style="left:231.0px;top:737.6px;width:77.0px;text-align:center;font-size:9px;">JN65</div>
<div class="t ui" style="left:164.5px;top:756.0px;">Az: 296</div>
<div class="t ui" style="left:217.0px;top:756.0px;">4955 km</div>
<div class="a" style="left:108.5px;top:773.0px;width:62.5px;height:16.5px;background:#fdfdfd;border:1px solid #d0d0d0;border-radius:3px;"></div><div class="t ui" style="left:108.5px;top:777.9px;width:62.5px;text-align:center;font-size:9px;">Lookup</div>
<div class="a" style="left:177.0px;top:773.0px;width:63.0px;height:16.5px;background:#fdfdfd;border:1px solid #d0d0d0;border-radius:3px;"></div><div class="t ui" style="left:177.0px;top:777.9px;width:63.0px;text-align:center;font-size:9px;">Add</div>
<div class="a" style="left:245.5px;top:773.0px;width:62.0px;height:16.5px;background:#fdfdfd;border:1px solid #d0d0d0;border-radius:3px;"></div><div class="t ui" style="left:245.5px;top:777.9px;width:62.0px;text-align:center;font-size:9px;">Ignore</div>
<div class="a" style="left:108.0px;top:798.5px;width:200.7px;height:52.5px;background:#000"></div>
<div class="t ui" style="left:108.0px;top:807.2px;width:200.7px;text-align:center;font-size:18.5px;color:#f2f23a;font-size:18.5px;letter-spacing:-0.3px">2026 Apr 25</div>
<div class="t ui" style="left:108.0px;top:828.2px;width:200.7px;text-align:center;font-size:18.5px;color:#f2f23a;font-size:18.5px">21:15:12</div>
<div class="a" style="left:314.7px;top:673.6px;width:10.7px;height:10.0px;background:#fdfdfd;border:1px solid #777;border-radius:2px"></div>
<div class="t ui" style="left:329.0px;top:675.0px;">Tx even/1st</div>
<div class="a" style="left:315.0px;top:691.8px;width:133.5px;height:13.6px;background:#fdfdfd;border-bottom:1px solid #8a8a8a;border-radius:2px 2px 0 0;"></div><div class="t ui" style="left:315.0px;top:695.0px;width:121.5px;text-align:center;">Tx  1802  Hz</div><div class="spinarr" style="left:438.5px;top:693.6px"></div>
<div class="a" style="left:315.7px;top:712.6px;width:27.3px;height:16.9px;background:#fdfdfd;border:1px solid #d0d0d0;border-radius:3px;"></div><div class="t ui" style="left:315.7px;top:717.7px;width:27.3px;text-align:center;font-size:9px;"></div>
<svg class="a" style="left:325.3px;top:717.5px" width="9" height="8"><path d="M0.5 7.5L4.5 0.5L8.5 7.5Z" fill="#111"/></svg>
<div class="a" style="left:350.5px;top:714.0px;width:63.2px;height:13.5px;background:#fdfdfd;border-bottom:1px solid #8a8a8a;border-radius:2px 2px 0 0;"></div><div class="t ui" style="left:350.5px;top:717.1px;width:51.2px;text-align:center;">F Tol  50</div><div class="spinarr" style="left:403.7px;top:715.8px"></div>
<div class="a" style="left:421.0px;top:712.6px;width:27.0px;height:16.9px;background:#fdfdfd;border:1px solid #d0d0d0;border-radius:3px;"></div><div class="t ui" style="left:421.0px;top:717.7px;width:27.0px;text-align:center;font-size:9px;"></div>
<svg class="a" style="left:430.0px;top:716.5px" width="9" height="8"><path d="M0.5 0.5L4.5 7.5L8.5 0.5Z" fill="#111"/></svg>
<div class="a" style="left:456.0px;top:717.6px;width:71.6px;height:13.9px;background:#fdfdfd;border-bottom:1px solid #8a8a8a;border-radius:2px 2px 0 0;"></div><div class="t ui" style="left:456.0px;top:720.9px;width:59.6px;text-align:center;">Submode A</div><div class="spinarr" style="left:517.6px;top:719.5px"></div>
<div class="a" style="left:314.7px;top:737.4px;width:134.9px;height:13.4px;background:#fdfdfd;border-bottom:1px solid #3a7ad0;border-radius:2px 2px 0 0;"></div><div class="t ui" style="left:314.7px;top:740.5px;width:122.9px;text-align:center;">Rx  1000| Hz</div><div class="spinarr" style="left:439.6px;top:739.1px"></div>
<div class="a" style="left:456.0px;top:737.4px;width:71.6px;height:13.6px;background:#fdfdfd;border-bottom:1px solid #8a8a8a;border-radius:2px 2px 0 0;"></div><div class="t ui" style="left:456.0px;top:740.6px;width:59.6px;text-align:center;">Max Drift  0</div><div class="spinarr" style="left:517.6px;top:739.2px"></div>
<div class="a" style="left:314.7px;top:758.0px;width:133.8px;height:13.2px;background:#fdfdfd;border-bottom:1px solid #8a8a8a;border-radius:2px 2px 0 0;"></div><div class="t ui" style="left:314.7px;top:761.0px;width:121.8px;text-align:center;">Report -22</div><div class="spinarr" style="left:438.5px;top:759.6px"></div>
<div class="a" style="left:314.7px;top:778.4px;width:133.8px;height:13.1px;background:#fdfdfd;border-bottom:1px solid #8a8a8a;border-radius:2px 2px 0 0;"></div><div class="t ui" style="left:314.7px;top:781.4px;width:121.8px;text-align:center;">T/R  60  s</div><div class="spinarr" style="left:438.5px;top:780.0px"></div>
<div class="a" style="left:314.7px;top:799.7px;width:10.7px;height:10.3px;background:#fdfdfd;border:1px solid #777;border-radius:2px"></div>
<div class="t ui" style="left:329.0px;top:801.5px;">Sh</div>
<div class="cb" style="left:349.5px;top:799.5px"></div>
<div class="t ui" style="left:364.5px;top:801.5px;">Auto Seq</div>
<div class="a" style="left:412.5px;top:797.7px;width:75.5px;height:16.6px;background:#fdfdfd;border:1px solid #d8d8d8;border-radius:3px"></div>
<div class="t ui" style="left:415.5px;top:801.5px;">CQ: Max Dist</div>
<div class="a" style="left:478.0px;top:802px;width:5px;height:5px;border:solid #606060;border-width:0 1px 1px 0;transform:rotate(45deg)"></div>
<div class="a" style="left:494.0px;top:800.0px;width:10.5px;height:10.5px;background:#f6f6f6;border:1px solid #c8c8c8;border-radius:2px"></div>
<div class="t ui" style="left:509.0px;top:801.5px;color:#a8a8a8">Tx6</div>
<div class="a" style="left:378.8px;top:820.0px;width:85.8px;height:10.7px;background:#f40000"></div>
<div class="t ui" style="left:378.8px;top:821.9px;width:85.8px;text-align:center;font-size:9px;color:#ffd0d0">Q65 Pileup</div>
<svg class="a" style="left:530.0px;top:668px" width="20" height="82" viewBox="1274 668 20 82"><path d="M1292 671 C1284 671 1279 673 1279 678 V688 C1279 692 1285 694.5 1292 695.3" fill="#f9f9f9" stroke="#222" stroke-width="1"/><path d="M1292 697 C1285 697 1280 699 1280 704 V713 C1280 717 1285 719 1292 719.8" fill="none" stroke="#222" stroke-width="1"/><path d="M1292 722.6 C1285 722.6 1280 724.6 1280 729.6 V739 C1280 743 1285 745 1292 746" fill="none" stroke="#222" stroke-width="1"/></svg>
<div class="t ui" style="left:538.5px;top:678.8px;transform:rotate(-90deg);font-size:9px">1</div>
<div class="t ui" style="left:538.5px;top:703.6px;transform:rotate(-90deg);font-size:9px">2</div>
<div class="t ui" style="left:538.5px;top:728.4px;transform:rotate(-90deg);font-size:9px">3</div>
<div class="a" style="left:548.0px;top:671.0px;width:269.0px;height:180.0px;background:#f9f9f9"></div>
<div class="a" style="left:559.0px;top:682.8px;width:166.0px;height:17.6px;background:#fdfdfd;border:1px solid #d0d0d0;border-radius:3px;"></div><div class="t ui" style="left:559.0px;top:688.2px;width:166.0px;text-align:center;font-size:9px;">Generate Std Msgs</div>
<div class="t ui" style="left:728.0px;top:688.6px;width:30.0px;text-align:center;font-size:9px;">Next</div>
<div class="t ui" style="left:768.0px;top:688.6px;width:32.0px;text-align:center;font-size:9px;">Now</div>
<div class="a" style="left:559.0px;top:707.0px;width:166.0px;height:16.0px;background:#f3f3f3;border-radius:2px"></div>
<div class="t ui" style="left:560.5px;top:710.1px;color:#9a9a9a">S57RR UN0GY MN83</div>
<div class="a" style="left:739.5px;top:709.5px;width:11.0px;height:11.0px;background:#fafafa;border:1px solid #707070;border-radius:50%"></div>
<div class="a" style="left:763.0px;top:707.0px;width:42.5px;height:16.0px;background:#f3f3f3;border:1px solid #e4e4e4;border-radius:3px"></div>
<div class="t ui" style="left:763.0px;top:711.6px;width:42.5px;text-align:center;font-size:9px;color:#a8a8a8">Tx 1</div>
<div class="a" style="left:559.0px;top:730.2px;width:166.0px;height:16.0px;background:#f6f6f6;border-bottom:1px solid #777;border-radius:2px"></div>
<div class="t ui" style="left:560.5px;top:733.3px;">S57RR UN0GY MN83</div>
<div class="a" style="left:739.5px;top:732.7px;width:11.0px;height:11.0px;background:#fff;border:3px solid #1a64c8;border-radius:50%"></div>
<div class="a" style="left:763.0px;top:730.2px;width:42.5px;height:16.0px;background:#fdfdfd;border:1px solid #d0d0d0;border-radius:3px;"></div><div class="t ui" style="left:763.0px;top:734.8px;width:42.5px;text-align:center;font-size:9px;">Tx 2</div>
<div class="a" style="left:559.0px;top:753.4px;width:166.0px;height:16.0px;background:#f6f6f6;border-bottom:1px solid #777;border-radius:2px"></div>
<div class="t ui" style="left:560.5px;top:756.5px;">S57RR UN0GY R MN83</div>
<div class="a" style="left:739.5px;top:755.9px;width:11.0px;height:11.0px;background:#fafafa;border:1px solid #707070;border-radius:50%"></div>
<div class="a" style="left:763.0px;top:753.4px;width:42.5px;height:16.0px;background:#fdfdfd;border:1px solid #d0d0d0;border-radius:3px;"></div><div class="t ui" style="left:763.0px;top:758.0px;width:42.5px;text-align:center;font-size:9px;">Tx 3</div>
<div class="a" style="left:559.0px;top:776.6px;width:166.0px;height:16.0px;background:#f6f6f6;border-bottom:1px solid #777;border-radius:2px"></div>
<div class="t ui" style="left:560.5px;top:779.7px;">S57RR UN0GY RR73</div>
<div class="a" style="left:739.5px;top:779.1px;width:11.0px;height:11.0px;background:#fafafa;border:1px solid #707070;border-radius:50%"></div>
<div class="a" style="left:763.0px;top:776.6px;width:42.5px;height:16.0px;background:#fdfdfd;border:1px solid #d0d0d0;border-radius:3px;"></div><div class="t ui" style="left:763.0px;top:781.2px;width:42.5px;text-align:center;font-size:9px;">Tx 4</div>
<div class="a" style="left:559.0px;top:799.8px;width:166.0px;height:16.0px;background:#fdfdfd;border:1px solid #e0e0e0;border-bottom:1px solid #888;border-radius:2px"></div>
<div class="t ui" style="left:561.5px;top:802.9px;">S57RR UN0GY 73</div>
<div class="a" style="left:715.0px;top:803.8px;width:5px;height:5px;border:solid #606060;border-width:0 1px 1px 0;transform:rotate(45deg)"></div>
<div class="a" style="left:739.5px;top:802.3px;width:11.0px;height:11.0px;background:#fafafa;border:1px solid #707070;border-radius:50%"></div>
<div class="a" style="left:763.0px;top:799.8px;width:42.5px;height:16.0px;background:#fdfdfd;border:1px solid #d0d0d0;border-radius:3px;"></div><div class="t ui" style="left:763.0px;top:804.4px;width:42.5px;text-align:center;font-size:9px;">Tx 5</div>
<div class="a" style="left:559.0px;top:823.0px;width:166.0px;height:16.0px;background:#f6f6f6;border-bottom:1px solid #777;border-radius:2px"></div>
<div class="t ui" style="left:560.5px;top:826.1px;">CQ UN0GY MN83</div>
<div class="a" style="left:739.5px;top:825.5px;width:11.0px;height:11.0px;background:#fafafa;border:1px solid #707070;border-radius:50%"></div>
<div class="a" style="left:763.0px;top:823.0px;width:42.5px;height:16.0px;background:#fdfdfd;border:1px solid #d0d0d0;border-radius:3px;"></div><div class="t ui" style="left:763.0px;top:827.6px;width:42.5px;text-align:center;font-size:9px;">Tx 6</div>
<div class="t ui" style="left:827.5px;top:682.5px;">Pwr</div>
<div class="a" style="left:832.5px;top:707.0px;width:2.0px;height:145.0px;background:#e0e0e0;border-radius:1px"></div>
<div class="a" style="left:843.0px;top:711.5px;width:3.0px;height:1.0px;background:#909090"></div>
<div class="a" style="left:843.0px;top:726.3px;width:3.0px;height:1.0px;background:#909090"></div>
<div class="a" style="left:843.0px;top:741.1px;width:3.0px;height:1.0px;background:#909090"></div>
<div class="a" style="left:843.0px;top:755.9px;width:3.0px;height:1.0px;background:#909090"></div>
<div class="a" style="left:843.0px;top:770.7px;width:3.0px;height:1.0px;background:#909090"></div>
<div class="a" style="left:843.0px;top:785.5px;width:3.0px;height:1.0px;background:#909090"></div>
<div class="a" style="left:843.0px;top:800.3px;width:3.0px;height:1.0px;background:#909090"></div>
<div class="a" style="left:843.0px;top:815.1px;width:3.0px;height:1.0px;background:#909090"></div>
<div class="a" style="left:843.0px;top:829.9px;width:3.0px;height:1.0px;background:#909090"></div>
<div class="a" style="left:843.0px;top:844.7px;width:3.0px;height:1.0px;background:#909090"></div>
<div class="a" style="left:843.0px;top:859.5px;width:3.0px;height:1.0px;background:#909090"></div>
<svg class="a" style="left:824.5px;top:717px" width="18" height="11"><path d="M0.5 0.5 H12 L17 5.5 L12 10.5 H0.5Z" fill="#1a73d0"/></svg>
<div class="a" style="left:0.0px;top:856.0px;width:856.0px;height:22.0px;background:#f0f0f0"></div>
<div class="a" style="left:1.4px;top:865.7px;width:86.0px;height:12.3px;background:#00f000;border:1px solid #bbb"></div>
<div class="t ui" style="left:1.4px;top:868.6px;width:86.0px;text-align:center;font-size:9px;color:#1a1a1a">Receiving</div>
<div class="a" style="left:92.8px;top:865.7px;width:68.2px;height:12.3px;background:#8cff3c;border:1px solid #bbb"></div>
<div class="t ui" style="left:92.8px;top:868.6px;width:68.2px;text-align:center;font-size:9px;color:#1a1a1a">Q65</div>
<div class="a" style="left:166.5px;top:865.7px;width:28.5px;height:12.3px;border:1px solid #c8c8c8"></div>
<div class="t ui" style="left:168.5px;top:867.5px;">19  20</div>
<div class="a" style="left:199.0px;top:865.7px;width:130.3px;height:12.3px;border:1px solid #c8c8c8"></div>
<div class="a" style="left:338.5px;top:862.0px;width:1.0px;height:16.0px;background:#d4d4d4"></div>
<div class="a" style="left:572.0px;top:865.5px;width:198.0px;height:12.5px;background:#e6e6e6;border:1px solid #c8c8c8"></div>
<div class="a" style="left:572.5px;top:866.0px;width:37.5px;height:12.0px;background:#1f7d1f"></div>
<div class="a" style="left:772.0px;top:862.0px;width:1.0px;height:16.0px;background:#d4d4d4"></div>
<div class="t ui" style="left:774.5px;top:868.0px;">12/60</div>
<div class="a" style="left:801.5px;top:862.0px;width:1.0px;height:16.0px;background:#d4d4d4"></div>
<div class="t ui" style="left:806.0px;top:868.0px;">WD:6m</div>
</div>
<script>
(function(){
var c=document.getElementById('wfc');if(!c||!c.getContext)return;
var ctx=c.getContext('2d'),W=728,H=199,img=ctx.createImageData(W,H),d=img.data;
var s=123456789;function r(){s^=s<<13;s^=s>>>17;s^=s<<5;return ((s>>>0)%100000)/100000;}
function g(){return (r()+r()+r()-1.5)*0.8165;}
var P=[[12,0.02],[22,0.06],[25,0.5],[28,0.97],[52,0.96],[60,0.88],[70,0.77],[82,0.69],[94,0.6],[106,0.52],[118,0.44],[132,0.36],[160,0.26],[190,0.19],[230,0.17],[260,0.18],[290,0.24],[340,0.28],[400,0.31],[450,0.31],[490,0.28],[540,0.23],[600,0.2],[640,0.21],[662,0.27],[682,0.35],[698,0.45],[708,0.51],[720,0.51],[726,0.41],[731,0.2],[740,0.08]];
function prof(x){for(var i=1;i<P.length;i++){if(x<=P[i][0]){var a=P[i-1],b=P[i];var t=(x-a[0])/(b[0]-a[0]);return a[1]+(b[1]-a[1])*t;}}return 0.08;}
var C=[[0,0,0,15],[0.17,0,4,70],[0.26,8,25,200],[0.37,30,55,255],[0.44,120,130,200],[0.5,195,195,130],[0.56,225,222,60],[0.7,240,215,30],[0.74,255,95,0],[1,255,72,0]];
function cmap(v){if(v<=0)return C[0];for(var i=1;i<C.length;i++){if(v<=C[i][0]){var a=C[i-1],b=C[i],t=(v-a[0])/(b[0]-a[0]);return [0,a[1]+(b[1]-a[1])*t,a[2]+(b[2]-a[2])*t,a[3]+(b[3]-a[3])*t];}}return C[C.length-1];}
var GW=Math.ceil(W/3)+2,GH=H+2,blob=new Float32Array(GW*GH);for(var i=0;i<blob.length;i++)blob[i]=g();
var GW2=Math.ceil(W/6)+2,blob2=new Float32Array(GW2*GH);for(var i=0;i<blob2.length;i++)blob2[i]=g();
var rowShift=[];for(var y=0;y<H;y++)rowShift.push((r()-0.5)*6);
var rowShift2=[];for(var y=0;y<H;y++)rowShift2.push((r()-0.5)*14);
for(var y=0;y<H;y++){for(var x=0;x<W;x++){
 var px=x+12;var k=px<95?1:(px>165?0:(165-px)/70);
 var sh=(px<30)?rowShift[y]:rowShift2[y]*Math.min(1,(px-25)/30)*k;
 var b2=blob2[(y*GW2)+((x/6)|0)];
 var bv=blob[(y*GW)+((x/3)|0)];
 var v=prof(px+sh+b2*3.5*k)+g()*(0.12+0.015*(1-k))+bv*0.07*(1-k);
 var L0=prof(px);if(px>140&&px<690&&r()<0.7*(L0-0.22))v+=0.14;
 var col=cmap(v);
 var q=(y*W+x)*4;d[q]=col[1];d[q+1]=col[2];d[q+2]=col[3];d[q+3]=255;
}}
ctx.putImageData(img,0,0);
})();
</script>

</body></html>
